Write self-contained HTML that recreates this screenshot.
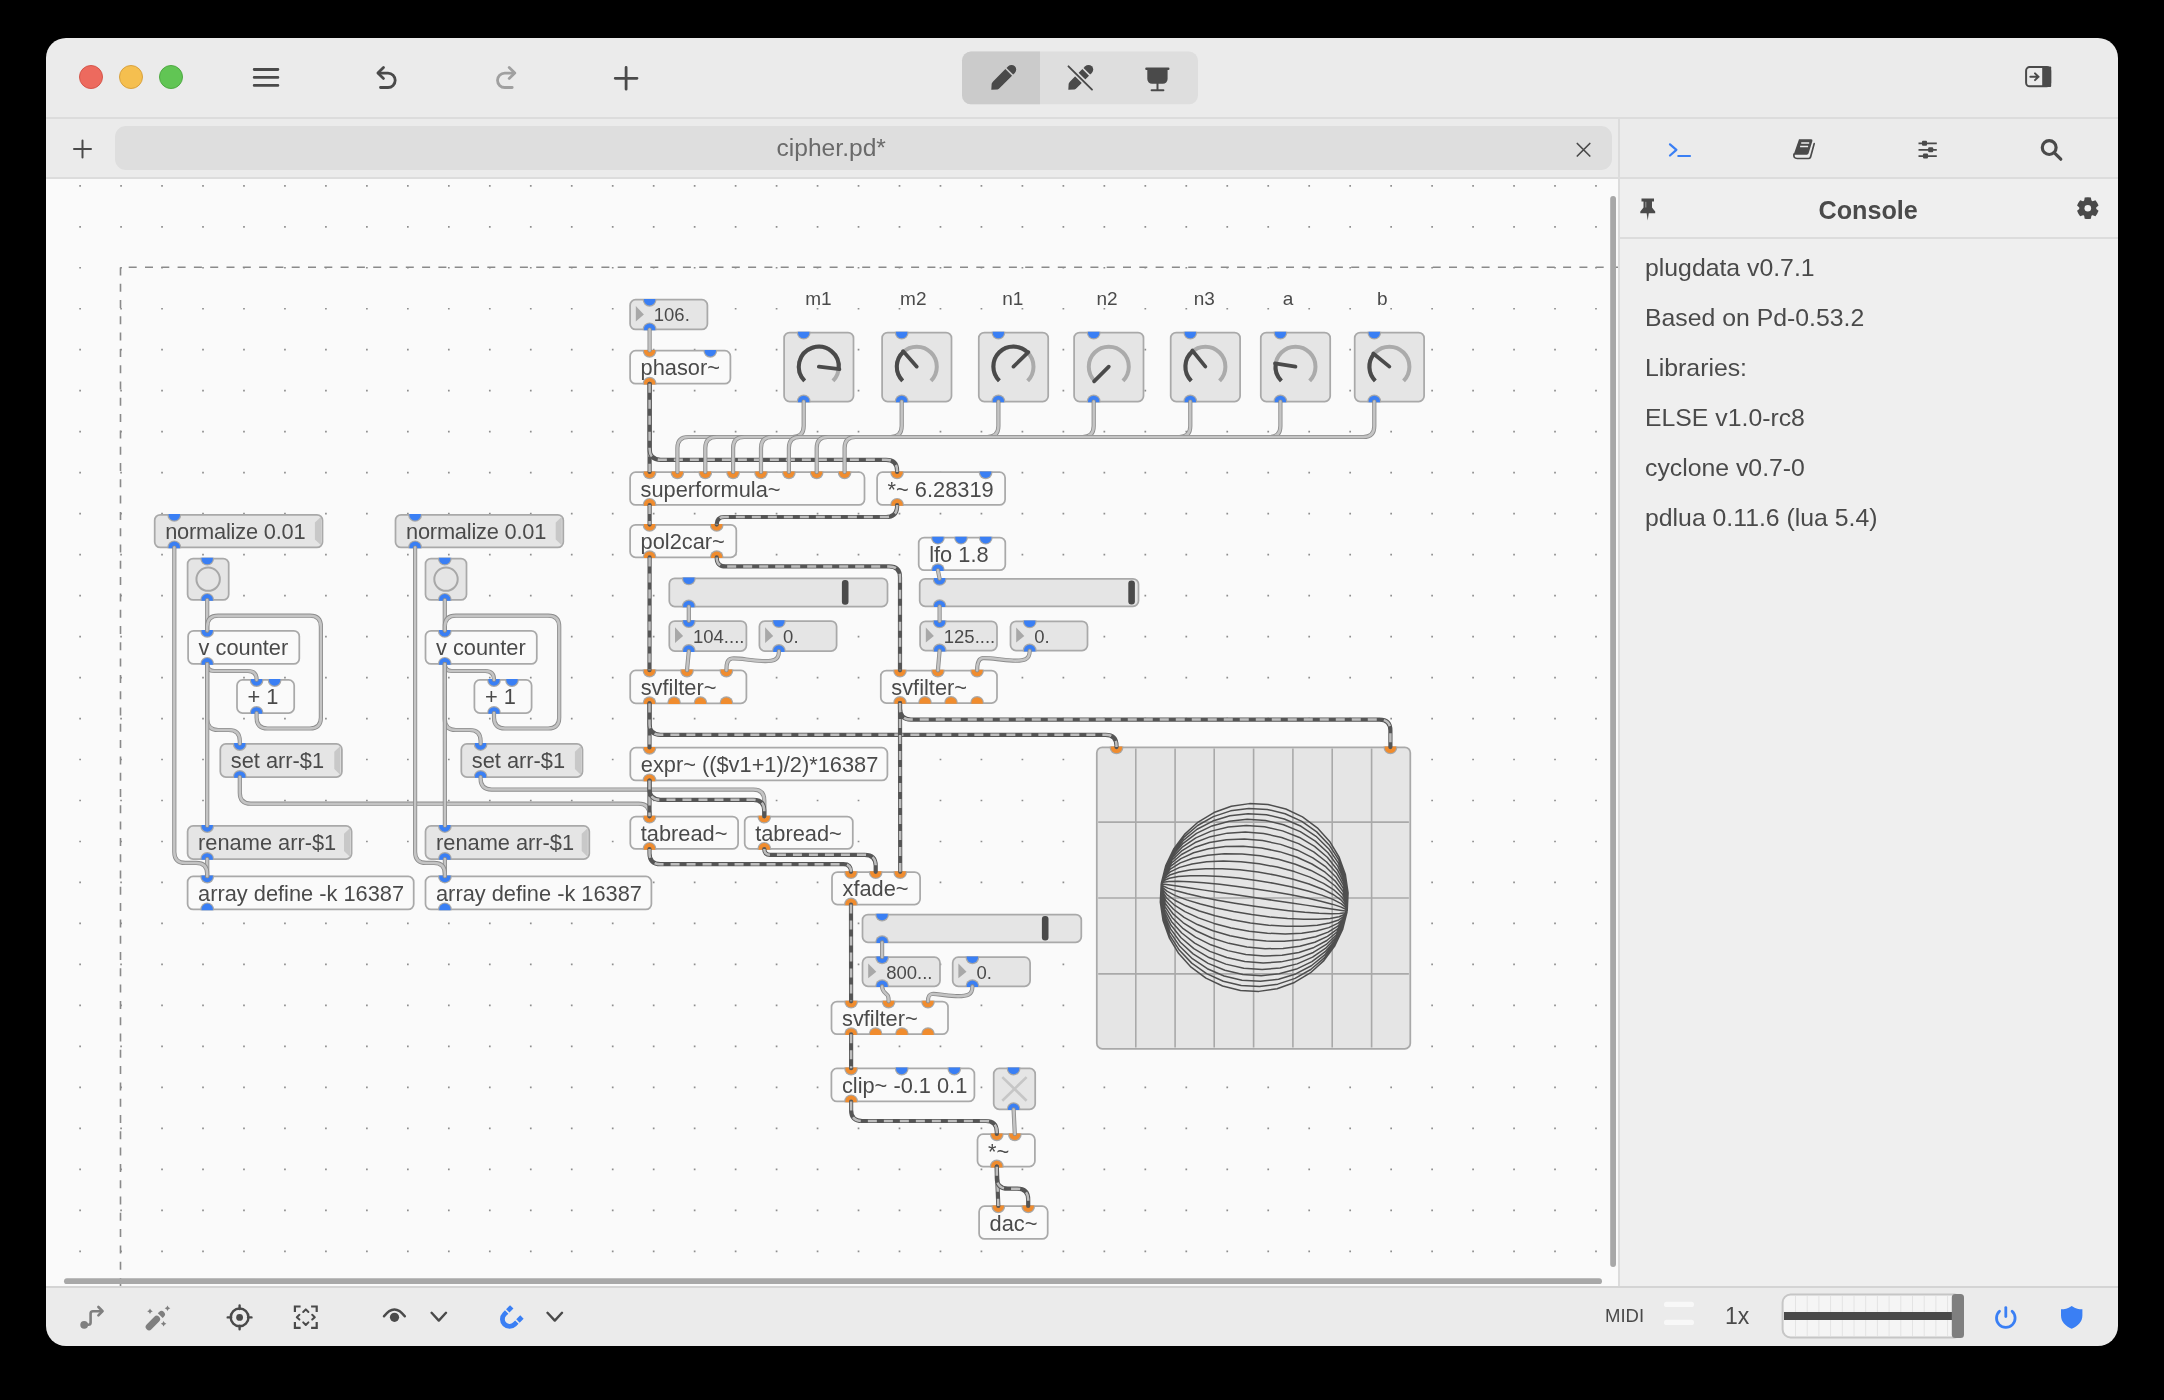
<!DOCTYPE html><html><head><meta charset="utf-8"><style>
*{margin:0;padding:0;box-sizing:border-box}
html,body{width:2164px;height:1400px;background:#000;overflow:hidden;font-family:"Liberation Sans", sans-serif}
.win{position:absolute;left:46px;top:38px;width:2072px;height:1308px;border-radius:20px;background:#EBEBEB;overflow:hidden}
.a{position:absolute}
.t{position:absolute;white-space:nowrap;color:#4A4A4A;line-height:1}
.tl{position:absolute;left:0;top:0;width:2164px;height:1400px;will-change:transform}
</style></head><body>
<div class="win">
<div class="a" style="left:-46px;top:-38px;width:2164px;height:1400px">
<div class="a" style="left:46px;top:117px;width:2072px;height:2px;background:#DCDCDC"></div>
<div class="a" style="left:46px;top:177px;width:1572px;height:2px;background:#DCDCDC"></div>
<div class="a" style="left:46px;top:179px;width:1572px;height:1108px;background:#FAFAFA"></div>
<div class="a" style="left:1620px;top:119px;width:498px;height:1168px;background:#EFEFEF"></div>
<div class="a" style="left:1620px;top:119px;width:498px;height:58px;background:#EBEBEB"></div>
<div class="a" style="left:1618px;top:119px;width:2px;height:1168px;background:#DCDCDC"></div>
<div class="a" style="left:1620px;top:177px;width:498px;height:2px;background:#DCDCDC"></div>
<div class="a" style="left:1620px;top:237px;width:498px;height:2px;background:#DCDCDC"></div>
<div class="a" style="left:46px;top:1286px;width:2072px;height:2px;background:#D4D4D4"></div>
<svg class="a" style="left:0;top:0" width="2164" height="1400"><path fill="#8E8E8E" d="M79.25 184.95h1.7v1.7h-1.7zM79.25 225.93h1.7v1.7h-1.7zM79.25 266.91h1.7v1.7h-1.7zM79.25 307.89h1.7v1.7h-1.7zM79.25 348.87h1.7v1.7h-1.7zM79.25 389.85h1.7v1.7h-1.7zM79.25 430.83h1.7v1.7h-1.7zM79.25 471.81h1.7v1.7h-1.7zM79.25 512.79h1.7v1.7h-1.7zM79.25 553.77h1.7v1.7h-1.7zM79.25 594.75h1.7v1.7h-1.7zM79.25 635.73h1.7v1.7h-1.7zM79.25 676.71h1.7v1.7h-1.7zM79.25 717.69h1.7v1.7h-1.7zM79.25 758.67h1.7v1.7h-1.7zM79.25 799.65h1.7v1.7h-1.7zM79.25 840.63h1.7v1.7h-1.7zM79.25 881.61h1.7v1.7h-1.7zM79.25 922.59h1.7v1.7h-1.7zM79.25 963.57h1.7v1.7h-1.7zM79.25 1004.55h1.7v1.7h-1.7zM79.25 1045.53h1.7v1.7h-1.7zM79.25 1086.51h1.7v1.7h-1.7zM79.25 1127.49h1.7v1.7h-1.7zM79.25 1168.47h1.7v1.7h-1.7zM79.25 1209.45h1.7v1.7h-1.7zM79.25 1250.43h1.7v1.7h-1.7zM120.22 184.95h1.7v1.7h-1.7zM120.22 225.93h1.7v1.7h-1.7zM120.22 266.91h1.7v1.7h-1.7zM120.22 307.89h1.7v1.7h-1.7zM120.22 348.87h1.7v1.7h-1.7zM120.22 389.85h1.7v1.7h-1.7zM120.22 430.83h1.7v1.7h-1.7zM120.22 471.81h1.7v1.7h-1.7zM120.22 512.79h1.7v1.7h-1.7zM120.22 553.77h1.7v1.7h-1.7zM120.22 594.75h1.7v1.7h-1.7zM120.22 635.73h1.7v1.7h-1.7zM120.22 676.71h1.7v1.7h-1.7zM120.22 717.69h1.7v1.7h-1.7zM120.22 758.67h1.7v1.7h-1.7zM120.22 799.65h1.7v1.7h-1.7zM120.22 840.63h1.7v1.7h-1.7zM120.22 881.61h1.7v1.7h-1.7zM120.22 922.59h1.7v1.7h-1.7zM120.22 963.57h1.7v1.7h-1.7zM120.22 1004.55h1.7v1.7h-1.7zM120.22 1045.53h1.7v1.7h-1.7zM120.22 1086.51h1.7v1.7h-1.7zM120.22 1127.49h1.7v1.7h-1.7zM120.22 1168.47h1.7v1.7h-1.7zM120.22 1209.45h1.7v1.7h-1.7zM120.22 1250.43h1.7v1.7h-1.7zM161.19 184.95h1.7v1.7h-1.7zM161.19 225.93h1.7v1.7h-1.7zM161.19 266.91h1.7v1.7h-1.7zM161.19 307.89h1.7v1.7h-1.7zM161.19 348.87h1.7v1.7h-1.7zM161.19 389.85h1.7v1.7h-1.7zM161.19 430.83h1.7v1.7h-1.7zM161.19 471.81h1.7v1.7h-1.7zM161.19 512.79h1.7v1.7h-1.7zM161.19 553.77h1.7v1.7h-1.7zM161.19 594.75h1.7v1.7h-1.7zM161.19 635.73h1.7v1.7h-1.7zM161.19 676.71h1.7v1.7h-1.7zM161.19 717.69h1.7v1.7h-1.7zM161.19 758.67h1.7v1.7h-1.7zM161.19 799.65h1.7v1.7h-1.7zM161.19 840.63h1.7v1.7h-1.7zM161.19 881.61h1.7v1.7h-1.7zM161.19 922.59h1.7v1.7h-1.7zM161.19 963.57h1.7v1.7h-1.7zM161.19 1004.55h1.7v1.7h-1.7zM161.19 1045.53h1.7v1.7h-1.7zM161.19 1086.51h1.7v1.7h-1.7zM161.19 1127.49h1.7v1.7h-1.7zM161.19 1168.47h1.7v1.7h-1.7zM161.19 1209.45h1.7v1.7h-1.7zM161.19 1250.43h1.7v1.7h-1.7zM202.16 184.95h1.7v1.7h-1.7zM202.16 225.93h1.7v1.7h-1.7zM202.16 266.91h1.7v1.7h-1.7zM202.16 307.89h1.7v1.7h-1.7zM202.16 348.87h1.7v1.7h-1.7zM202.16 389.85h1.7v1.7h-1.7zM202.16 430.83h1.7v1.7h-1.7zM202.16 471.81h1.7v1.7h-1.7zM202.16 512.79h1.7v1.7h-1.7zM202.16 553.77h1.7v1.7h-1.7zM202.16 594.75h1.7v1.7h-1.7zM202.16 635.73h1.7v1.7h-1.7zM202.16 676.71h1.7v1.7h-1.7zM202.16 717.69h1.7v1.7h-1.7zM202.16 758.67h1.7v1.7h-1.7zM202.16 799.65h1.7v1.7h-1.7zM202.16 840.63h1.7v1.7h-1.7zM202.16 881.61h1.7v1.7h-1.7zM202.16 922.59h1.7v1.7h-1.7zM202.16 963.57h1.7v1.7h-1.7zM202.16 1004.55h1.7v1.7h-1.7zM202.16 1045.53h1.7v1.7h-1.7zM202.16 1086.51h1.7v1.7h-1.7zM202.16 1127.49h1.7v1.7h-1.7zM202.16 1168.47h1.7v1.7h-1.7zM202.16 1209.45h1.7v1.7h-1.7zM202.16 1250.43h1.7v1.7h-1.7zM243.13 184.95h1.7v1.7h-1.7zM243.13 225.93h1.7v1.7h-1.7zM243.13 266.91h1.7v1.7h-1.7zM243.13 307.89h1.7v1.7h-1.7zM243.13 348.87h1.7v1.7h-1.7zM243.13 389.85h1.7v1.7h-1.7zM243.13 430.83h1.7v1.7h-1.7zM243.13 471.81h1.7v1.7h-1.7zM243.13 512.79h1.7v1.7h-1.7zM243.13 553.77h1.7v1.7h-1.7zM243.13 594.75h1.7v1.7h-1.7zM243.13 635.73h1.7v1.7h-1.7zM243.13 676.71h1.7v1.7h-1.7zM243.13 717.69h1.7v1.7h-1.7zM243.13 758.67h1.7v1.7h-1.7zM243.13 799.65h1.7v1.7h-1.7zM243.13 840.63h1.7v1.7h-1.7zM243.13 881.61h1.7v1.7h-1.7zM243.13 922.59h1.7v1.7h-1.7zM243.13 963.57h1.7v1.7h-1.7zM243.13 1004.55h1.7v1.7h-1.7zM243.13 1045.53h1.7v1.7h-1.7zM243.13 1086.51h1.7v1.7h-1.7zM243.13 1127.49h1.7v1.7h-1.7zM243.13 1168.47h1.7v1.7h-1.7zM243.13 1209.45h1.7v1.7h-1.7zM243.13 1250.43h1.7v1.7h-1.7zM284.10 184.95h1.7v1.7h-1.7zM284.10 225.93h1.7v1.7h-1.7zM284.10 266.91h1.7v1.7h-1.7zM284.10 307.89h1.7v1.7h-1.7zM284.10 348.87h1.7v1.7h-1.7zM284.10 389.85h1.7v1.7h-1.7zM284.10 430.83h1.7v1.7h-1.7zM284.10 471.81h1.7v1.7h-1.7zM284.10 512.79h1.7v1.7h-1.7zM284.10 553.77h1.7v1.7h-1.7zM284.10 594.75h1.7v1.7h-1.7zM284.10 635.73h1.7v1.7h-1.7zM284.10 676.71h1.7v1.7h-1.7zM284.10 717.69h1.7v1.7h-1.7zM284.10 758.67h1.7v1.7h-1.7zM284.10 799.65h1.7v1.7h-1.7zM284.10 840.63h1.7v1.7h-1.7zM284.10 881.61h1.7v1.7h-1.7zM284.10 922.59h1.7v1.7h-1.7zM284.10 963.57h1.7v1.7h-1.7zM284.10 1004.55h1.7v1.7h-1.7zM284.10 1045.53h1.7v1.7h-1.7zM284.10 1086.51h1.7v1.7h-1.7zM284.10 1127.49h1.7v1.7h-1.7zM284.10 1168.47h1.7v1.7h-1.7zM284.10 1209.45h1.7v1.7h-1.7zM284.10 1250.43h1.7v1.7h-1.7zM325.07 184.95h1.7v1.7h-1.7zM325.07 225.93h1.7v1.7h-1.7zM325.07 266.91h1.7v1.7h-1.7zM325.07 307.89h1.7v1.7h-1.7zM325.07 348.87h1.7v1.7h-1.7zM325.07 389.85h1.7v1.7h-1.7zM325.07 430.83h1.7v1.7h-1.7zM325.07 471.81h1.7v1.7h-1.7zM325.07 512.79h1.7v1.7h-1.7zM325.07 553.77h1.7v1.7h-1.7zM325.07 594.75h1.7v1.7h-1.7zM325.07 635.73h1.7v1.7h-1.7zM325.07 676.71h1.7v1.7h-1.7zM325.07 717.69h1.7v1.7h-1.7zM325.07 758.67h1.7v1.7h-1.7zM325.07 799.65h1.7v1.7h-1.7zM325.07 840.63h1.7v1.7h-1.7zM325.07 881.61h1.7v1.7h-1.7zM325.07 922.59h1.7v1.7h-1.7zM325.07 963.57h1.7v1.7h-1.7zM325.07 1004.55h1.7v1.7h-1.7zM325.07 1045.53h1.7v1.7h-1.7zM325.07 1086.51h1.7v1.7h-1.7zM325.07 1127.49h1.7v1.7h-1.7zM325.07 1168.47h1.7v1.7h-1.7zM325.07 1209.45h1.7v1.7h-1.7zM325.07 1250.43h1.7v1.7h-1.7zM366.04 184.95h1.7v1.7h-1.7zM366.04 225.93h1.7v1.7h-1.7zM366.04 266.91h1.7v1.7h-1.7zM366.04 307.89h1.7v1.7h-1.7zM366.04 348.87h1.7v1.7h-1.7zM366.04 389.85h1.7v1.7h-1.7zM366.04 430.83h1.7v1.7h-1.7zM366.04 471.81h1.7v1.7h-1.7zM366.04 512.79h1.7v1.7h-1.7zM366.04 553.77h1.7v1.7h-1.7zM366.04 594.75h1.7v1.7h-1.7zM366.04 635.73h1.7v1.7h-1.7zM366.04 676.71h1.7v1.7h-1.7zM366.04 717.69h1.7v1.7h-1.7zM366.04 758.67h1.7v1.7h-1.7zM366.04 799.65h1.7v1.7h-1.7zM366.04 840.63h1.7v1.7h-1.7zM366.04 881.61h1.7v1.7h-1.7zM366.04 922.59h1.7v1.7h-1.7zM366.04 963.57h1.7v1.7h-1.7zM366.04 1004.55h1.7v1.7h-1.7zM366.04 1045.53h1.7v1.7h-1.7zM366.04 1086.51h1.7v1.7h-1.7zM366.04 1127.49h1.7v1.7h-1.7zM366.04 1168.47h1.7v1.7h-1.7zM366.04 1209.45h1.7v1.7h-1.7zM366.04 1250.43h1.7v1.7h-1.7zM407.01 184.95h1.7v1.7h-1.7zM407.01 225.93h1.7v1.7h-1.7zM407.01 266.91h1.7v1.7h-1.7zM407.01 307.89h1.7v1.7h-1.7zM407.01 348.87h1.7v1.7h-1.7zM407.01 389.85h1.7v1.7h-1.7zM407.01 430.83h1.7v1.7h-1.7zM407.01 471.81h1.7v1.7h-1.7zM407.01 512.79h1.7v1.7h-1.7zM407.01 553.77h1.7v1.7h-1.7zM407.01 594.75h1.7v1.7h-1.7zM407.01 635.73h1.7v1.7h-1.7zM407.01 676.71h1.7v1.7h-1.7zM407.01 717.69h1.7v1.7h-1.7zM407.01 758.67h1.7v1.7h-1.7zM407.01 799.65h1.7v1.7h-1.7zM407.01 840.63h1.7v1.7h-1.7zM407.01 881.61h1.7v1.7h-1.7zM407.01 922.59h1.7v1.7h-1.7zM407.01 963.57h1.7v1.7h-1.7zM407.01 1004.55h1.7v1.7h-1.7zM407.01 1045.53h1.7v1.7h-1.7zM407.01 1086.51h1.7v1.7h-1.7zM407.01 1127.49h1.7v1.7h-1.7zM407.01 1168.47h1.7v1.7h-1.7zM407.01 1209.45h1.7v1.7h-1.7zM407.01 1250.43h1.7v1.7h-1.7zM447.98 184.95h1.7v1.7h-1.7zM447.98 225.93h1.7v1.7h-1.7zM447.98 266.91h1.7v1.7h-1.7zM447.98 307.89h1.7v1.7h-1.7zM447.98 348.87h1.7v1.7h-1.7zM447.98 389.85h1.7v1.7h-1.7zM447.98 430.83h1.7v1.7h-1.7zM447.98 471.81h1.7v1.7h-1.7zM447.98 512.79h1.7v1.7h-1.7zM447.98 553.77h1.7v1.7h-1.7zM447.98 594.75h1.7v1.7h-1.7zM447.98 635.73h1.7v1.7h-1.7zM447.98 676.71h1.7v1.7h-1.7zM447.98 717.69h1.7v1.7h-1.7zM447.98 758.67h1.7v1.7h-1.7zM447.98 799.65h1.7v1.7h-1.7zM447.98 840.63h1.7v1.7h-1.7zM447.98 881.61h1.7v1.7h-1.7zM447.98 922.59h1.7v1.7h-1.7zM447.98 963.57h1.7v1.7h-1.7zM447.98 1004.55h1.7v1.7h-1.7zM447.98 1045.53h1.7v1.7h-1.7zM447.98 1086.51h1.7v1.7h-1.7zM447.98 1127.49h1.7v1.7h-1.7zM447.98 1168.47h1.7v1.7h-1.7zM447.98 1209.45h1.7v1.7h-1.7zM447.98 1250.43h1.7v1.7h-1.7zM488.95 184.95h1.7v1.7h-1.7zM488.95 225.93h1.7v1.7h-1.7zM488.95 266.91h1.7v1.7h-1.7zM488.95 307.89h1.7v1.7h-1.7zM488.95 348.87h1.7v1.7h-1.7zM488.95 389.85h1.7v1.7h-1.7zM488.95 430.83h1.7v1.7h-1.7zM488.95 471.81h1.7v1.7h-1.7zM488.95 512.79h1.7v1.7h-1.7zM488.95 553.77h1.7v1.7h-1.7zM488.95 594.75h1.7v1.7h-1.7zM488.95 635.73h1.7v1.7h-1.7zM488.95 676.71h1.7v1.7h-1.7zM488.95 717.69h1.7v1.7h-1.7zM488.95 758.67h1.7v1.7h-1.7zM488.95 799.65h1.7v1.7h-1.7zM488.95 840.63h1.7v1.7h-1.7zM488.95 881.61h1.7v1.7h-1.7zM488.95 922.59h1.7v1.7h-1.7zM488.95 963.57h1.7v1.7h-1.7zM488.95 1004.55h1.7v1.7h-1.7zM488.95 1045.53h1.7v1.7h-1.7zM488.95 1086.51h1.7v1.7h-1.7zM488.95 1127.49h1.7v1.7h-1.7zM488.95 1168.47h1.7v1.7h-1.7zM488.95 1209.45h1.7v1.7h-1.7zM488.95 1250.43h1.7v1.7h-1.7zM529.92 184.95h1.7v1.7h-1.7zM529.92 225.93h1.7v1.7h-1.7zM529.92 266.91h1.7v1.7h-1.7zM529.92 307.89h1.7v1.7h-1.7zM529.92 348.87h1.7v1.7h-1.7zM529.92 389.85h1.7v1.7h-1.7zM529.92 430.83h1.7v1.7h-1.7zM529.92 471.81h1.7v1.7h-1.7zM529.92 512.79h1.7v1.7h-1.7zM529.92 553.77h1.7v1.7h-1.7zM529.92 594.75h1.7v1.7h-1.7zM529.92 635.73h1.7v1.7h-1.7zM529.92 676.71h1.7v1.7h-1.7zM529.92 717.69h1.7v1.7h-1.7zM529.92 758.67h1.7v1.7h-1.7zM529.92 799.65h1.7v1.7h-1.7zM529.92 840.63h1.7v1.7h-1.7zM529.92 881.61h1.7v1.7h-1.7zM529.92 922.59h1.7v1.7h-1.7zM529.92 963.57h1.7v1.7h-1.7zM529.92 1004.55h1.7v1.7h-1.7zM529.92 1045.53h1.7v1.7h-1.7zM529.92 1086.51h1.7v1.7h-1.7zM529.92 1127.49h1.7v1.7h-1.7zM529.92 1168.47h1.7v1.7h-1.7zM529.92 1209.45h1.7v1.7h-1.7zM529.92 1250.43h1.7v1.7h-1.7zM570.89 184.95h1.7v1.7h-1.7zM570.89 225.93h1.7v1.7h-1.7zM570.89 266.91h1.7v1.7h-1.7zM570.89 307.89h1.7v1.7h-1.7zM570.89 348.87h1.7v1.7h-1.7zM570.89 389.85h1.7v1.7h-1.7zM570.89 430.83h1.7v1.7h-1.7zM570.89 471.81h1.7v1.7h-1.7zM570.89 512.79h1.7v1.7h-1.7zM570.89 553.77h1.7v1.7h-1.7zM570.89 594.75h1.7v1.7h-1.7zM570.89 635.73h1.7v1.7h-1.7zM570.89 676.71h1.7v1.7h-1.7zM570.89 717.69h1.7v1.7h-1.7zM570.89 758.67h1.7v1.7h-1.7zM570.89 799.65h1.7v1.7h-1.7zM570.89 840.63h1.7v1.7h-1.7zM570.89 881.61h1.7v1.7h-1.7zM570.89 922.59h1.7v1.7h-1.7zM570.89 963.57h1.7v1.7h-1.7zM570.89 1004.55h1.7v1.7h-1.7zM570.89 1045.53h1.7v1.7h-1.7zM570.89 1086.51h1.7v1.7h-1.7zM570.89 1127.49h1.7v1.7h-1.7zM570.89 1168.47h1.7v1.7h-1.7zM570.89 1209.45h1.7v1.7h-1.7zM570.89 1250.43h1.7v1.7h-1.7zM611.86 184.95h1.7v1.7h-1.7zM611.86 225.93h1.7v1.7h-1.7zM611.86 266.91h1.7v1.7h-1.7zM611.86 307.89h1.7v1.7h-1.7zM611.86 348.87h1.7v1.7h-1.7zM611.86 389.85h1.7v1.7h-1.7zM611.86 430.83h1.7v1.7h-1.7zM611.86 471.81h1.7v1.7h-1.7zM611.86 512.79h1.7v1.7h-1.7zM611.86 553.77h1.7v1.7h-1.7zM611.86 594.75h1.7v1.7h-1.7zM611.86 635.73h1.7v1.7h-1.7zM611.86 676.71h1.7v1.7h-1.7zM611.86 717.69h1.7v1.7h-1.7zM611.86 758.67h1.7v1.7h-1.7zM611.86 799.65h1.7v1.7h-1.7zM611.86 840.63h1.7v1.7h-1.7zM611.86 881.61h1.7v1.7h-1.7zM611.86 922.59h1.7v1.7h-1.7zM611.86 963.57h1.7v1.7h-1.7zM611.86 1004.55h1.7v1.7h-1.7zM611.86 1045.53h1.7v1.7h-1.7zM611.86 1086.51h1.7v1.7h-1.7zM611.86 1127.49h1.7v1.7h-1.7zM611.86 1168.47h1.7v1.7h-1.7zM611.86 1209.45h1.7v1.7h-1.7zM611.86 1250.43h1.7v1.7h-1.7zM652.83 184.95h1.7v1.7h-1.7zM652.83 225.93h1.7v1.7h-1.7zM652.83 266.91h1.7v1.7h-1.7zM652.83 307.89h1.7v1.7h-1.7zM652.83 348.87h1.7v1.7h-1.7zM652.83 389.85h1.7v1.7h-1.7zM652.83 430.83h1.7v1.7h-1.7zM652.83 471.81h1.7v1.7h-1.7zM652.83 512.79h1.7v1.7h-1.7zM652.83 553.77h1.7v1.7h-1.7zM652.83 594.75h1.7v1.7h-1.7zM652.83 635.73h1.7v1.7h-1.7zM652.83 676.71h1.7v1.7h-1.7zM652.83 717.69h1.7v1.7h-1.7zM652.83 758.67h1.7v1.7h-1.7zM652.83 799.65h1.7v1.7h-1.7zM652.83 840.63h1.7v1.7h-1.7zM652.83 881.61h1.7v1.7h-1.7zM652.83 922.59h1.7v1.7h-1.7zM652.83 963.57h1.7v1.7h-1.7zM652.83 1004.55h1.7v1.7h-1.7zM652.83 1045.53h1.7v1.7h-1.7zM652.83 1086.51h1.7v1.7h-1.7zM652.83 1127.49h1.7v1.7h-1.7zM652.83 1168.47h1.7v1.7h-1.7zM652.83 1209.45h1.7v1.7h-1.7zM652.83 1250.43h1.7v1.7h-1.7zM693.80 184.95h1.7v1.7h-1.7zM693.80 225.93h1.7v1.7h-1.7zM693.80 266.91h1.7v1.7h-1.7zM693.80 307.89h1.7v1.7h-1.7zM693.80 348.87h1.7v1.7h-1.7zM693.80 389.85h1.7v1.7h-1.7zM693.80 430.83h1.7v1.7h-1.7zM693.80 471.81h1.7v1.7h-1.7zM693.80 512.79h1.7v1.7h-1.7zM693.80 553.77h1.7v1.7h-1.7zM693.80 594.75h1.7v1.7h-1.7zM693.80 635.73h1.7v1.7h-1.7zM693.80 676.71h1.7v1.7h-1.7zM693.80 717.69h1.7v1.7h-1.7zM693.80 758.67h1.7v1.7h-1.7zM693.80 799.65h1.7v1.7h-1.7zM693.80 840.63h1.7v1.7h-1.7zM693.80 881.61h1.7v1.7h-1.7zM693.80 922.59h1.7v1.7h-1.7zM693.80 963.57h1.7v1.7h-1.7zM693.80 1004.55h1.7v1.7h-1.7zM693.80 1045.53h1.7v1.7h-1.7zM693.80 1086.51h1.7v1.7h-1.7zM693.80 1127.49h1.7v1.7h-1.7zM693.80 1168.47h1.7v1.7h-1.7zM693.80 1209.45h1.7v1.7h-1.7zM693.80 1250.43h1.7v1.7h-1.7zM734.77 184.95h1.7v1.7h-1.7zM734.77 225.93h1.7v1.7h-1.7zM734.77 266.91h1.7v1.7h-1.7zM734.77 307.89h1.7v1.7h-1.7zM734.77 348.87h1.7v1.7h-1.7zM734.77 389.85h1.7v1.7h-1.7zM734.77 430.83h1.7v1.7h-1.7zM734.77 471.81h1.7v1.7h-1.7zM734.77 512.79h1.7v1.7h-1.7zM734.77 553.77h1.7v1.7h-1.7zM734.77 594.75h1.7v1.7h-1.7zM734.77 635.73h1.7v1.7h-1.7zM734.77 676.71h1.7v1.7h-1.7zM734.77 717.69h1.7v1.7h-1.7zM734.77 758.67h1.7v1.7h-1.7zM734.77 799.65h1.7v1.7h-1.7zM734.77 840.63h1.7v1.7h-1.7zM734.77 881.61h1.7v1.7h-1.7zM734.77 922.59h1.7v1.7h-1.7zM734.77 963.57h1.7v1.7h-1.7zM734.77 1004.55h1.7v1.7h-1.7zM734.77 1045.53h1.7v1.7h-1.7zM734.77 1086.51h1.7v1.7h-1.7zM734.77 1127.49h1.7v1.7h-1.7zM734.77 1168.47h1.7v1.7h-1.7zM734.77 1209.45h1.7v1.7h-1.7zM734.77 1250.43h1.7v1.7h-1.7zM775.74 184.95h1.7v1.7h-1.7zM775.74 225.93h1.7v1.7h-1.7zM775.74 266.91h1.7v1.7h-1.7zM775.74 307.89h1.7v1.7h-1.7zM775.74 348.87h1.7v1.7h-1.7zM775.74 389.85h1.7v1.7h-1.7zM775.74 430.83h1.7v1.7h-1.7zM775.74 471.81h1.7v1.7h-1.7zM775.74 512.79h1.7v1.7h-1.7zM775.74 553.77h1.7v1.7h-1.7zM775.74 594.75h1.7v1.7h-1.7zM775.74 635.73h1.7v1.7h-1.7zM775.74 676.71h1.7v1.7h-1.7zM775.74 717.69h1.7v1.7h-1.7zM775.74 758.67h1.7v1.7h-1.7zM775.74 799.65h1.7v1.7h-1.7zM775.74 840.63h1.7v1.7h-1.7zM775.74 881.61h1.7v1.7h-1.7zM775.74 922.59h1.7v1.7h-1.7zM775.74 963.57h1.7v1.7h-1.7zM775.74 1004.55h1.7v1.7h-1.7zM775.74 1045.53h1.7v1.7h-1.7zM775.74 1086.51h1.7v1.7h-1.7zM775.74 1127.49h1.7v1.7h-1.7zM775.74 1168.47h1.7v1.7h-1.7zM775.74 1209.45h1.7v1.7h-1.7zM775.74 1250.43h1.7v1.7h-1.7zM816.71 184.95h1.7v1.7h-1.7zM816.71 225.93h1.7v1.7h-1.7zM816.71 266.91h1.7v1.7h-1.7zM816.71 307.89h1.7v1.7h-1.7zM816.71 348.87h1.7v1.7h-1.7zM816.71 389.85h1.7v1.7h-1.7zM816.71 430.83h1.7v1.7h-1.7zM816.71 471.81h1.7v1.7h-1.7zM816.71 512.79h1.7v1.7h-1.7zM816.71 553.77h1.7v1.7h-1.7zM816.71 594.75h1.7v1.7h-1.7zM816.71 635.73h1.7v1.7h-1.7zM816.71 676.71h1.7v1.7h-1.7zM816.71 717.69h1.7v1.7h-1.7zM816.71 758.67h1.7v1.7h-1.7zM816.71 799.65h1.7v1.7h-1.7zM816.71 840.63h1.7v1.7h-1.7zM816.71 881.61h1.7v1.7h-1.7zM816.71 922.59h1.7v1.7h-1.7zM816.71 963.57h1.7v1.7h-1.7zM816.71 1004.55h1.7v1.7h-1.7zM816.71 1045.53h1.7v1.7h-1.7zM816.71 1086.51h1.7v1.7h-1.7zM816.71 1127.49h1.7v1.7h-1.7zM816.71 1168.47h1.7v1.7h-1.7zM816.71 1209.45h1.7v1.7h-1.7zM816.71 1250.43h1.7v1.7h-1.7zM857.68 184.95h1.7v1.7h-1.7zM857.68 225.93h1.7v1.7h-1.7zM857.68 266.91h1.7v1.7h-1.7zM857.68 307.89h1.7v1.7h-1.7zM857.68 348.87h1.7v1.7h-1.7zM857.68 389.85h1.7v1.7h-1.7zM857.68 430.83h1.7v1.7h-1.7zM857.68 471.81h1.7v1.7h-1.7zM857.68 512.79h1.7v1.7h-1.7zM857.68 553.77h1.7v1.7h-1.7zM857.68 594.75h1.7v1.7h-1.7zM857.68 635.73h1.7v1.7h-1.7zM857.68 676.71h1.7v1.7h-1.7zM857.68 717.69h1.7v1.7h-1.7zM857.68 758.67h1.7v1.7h-1.7zM857.68 799.65h1.7v1.7h-1.7zM857.68 840.63h1.7v1.7h-1.7zM857.68 881.61h1.7v1.7h-1.7zM857.68 922.59h1.7v1.7h-1.7zM857.68 963.57h1.7v1.7h-1.7zM857.68 1004.55h1.7v1.7h-1.7zM857.68 1045.53h1.7v1.7h-1.7zM857.68 1086.51h1.7v1.7h-1.7zM857.68 1127.49h1.7v1.7h-1.7zM857.68 1168.47h1.7v1.7h-1.7zM857.68 1209.45h1.7v1.7h-1.7zM857.68 1250.43h1.7v1.7h-1.7zM898.65 184.95h1.7v1.7h-1.7zM898.65 225.93h1.7v1.7h-1.7zM898.65 266.91h1.7v1.7h-1.7zM898.65 307.89h1.7v1.7h-1.7zM898.65 348.87h1.7v1.7h-1.7zM898.65 389.85h1.7v1.7h-1.7zM898.65 430.83h1.7v1.7h-1.7zM898.65 471.81h1.7v1.7h-1.7zM898.65 512.79h1.7v1.7h-1.7zM898.65 553.77h1.7v1.7h-1.7zM898.65 594.75h1.7v1.7h-1.7zM898.65 635.73h1.7v1.7h-1.7zM898.65 676.71h1.7v1.7h-1.7zM898.65 717.69h1.7v1.7h-1.7zM898.65 758.67h1.7v1.7h-1.7zM898.65 799.65h1.7v1.7h-1.7zM898.65 840.63h1.7v1.7h-1.7zM898.65 881.61h1.7v1.7h-1.7zM898.65 922.59h1.7v1.7h-1.7zM898.65 963.57h1.7v1.7h-1.7zM898.65 1004.55h1.7v1.7h-1.7zM898.65 1045.53h1.7v1.7h-1.7zM898.65 1086.51h1.7v1.7h-1.7zM898.65 1127.49h1.7v1.7h-1.7zM898.65 1168.47h1.7v1.7h-1.7zM898.65 1209.45h1.7v1.7h-1.7zM898.65 1250.43h1.7v1.7h-1.7zM939.62 184.95h1.7v1.7h-1.7zM939.62 225.93h1.7v1.7h-1.7zM939.62 266.91h1.7v1.7h-1.7zM939.62 307.89h1.7v1.7h-1.7zM939.62 348.87h1.7v1.7h-1.7zM939.62 389.85h1.7v1.7h-1.7zM939.62 430.83h1.7v1.7h-1.7zM939.62 471.81h1.7v1.7h-1.7zM939.62 512.79h1.7v1.7h-1.7zM939.62 553.77h1.7v1.7h-1.7zM939.62 594.75h1.7v1.7h-1.7zM939.62 635.73h1.7v1.7h-1.7zM939.62 676.71h1.7v1.7h-1.7zM939.62 717.69h1.7v1.7h-1.7zM939.62 758.67h1.7v1.7h-1.7zM939.62 799.65h1.7v1.7h-1.7zM939.62 840.63h1.7v1.7h-1.7zM939.62 881.61h1.7v1.7h-1.7zM939.62 922.59h1.7v1.7h-1.7zM939.62 963.57h1.7v1.7h-1.7zM939.62 1004.55h1.7v1.7h-1.7zM939.62 1045.53h1.7v1.7h-1.7zM939.62 1086.51h1.7v1.7h-1.7zM939.62 1127.49h1.7v1.7h-1.7zM939.62 1168.47h1.7v1.7h-1.7zM939.62 1209.45h1.7v1.7h-1.7zM939.62 1250.43h1.7v1.7h-1.7zM980.59 184.95h1.7v1.7h-1.7zM980.59 225.93h1.7v1.7h-1.7zM980.59 266.91h1.7v1.7h-1.7zM980.59 307.89h1.7v1.7h-1.7zM980.59 348.87h1.7v1.7h-1.7zM980.59 389.85h1.7v1.7h-1.7zM980.59 430.83h1.7v1.7h-1.7zM980.59 471.81h1.7v1.7h-1.7zM980.59 512.79h1.7v1.7h-1.7zM980.59 553.77h1.7v1.7h-1.7zM980.59 594.75h1.7v1.7h-1.7zM980.59 635.73h1.7v1.7h-1.7zM980.59 676.71h1.7v1.7h-1.7zM980.59 717.69h1.7v1.7h-1.7zM980.59 758.67h1.7v1.7h-1.7zM980.59 799.65h1.7v1.7h-1.7zM980.59 840.63h1.7v1.7h-1.7zM980.59 881.61h1.7v1.7h-1.7zM980.59 922.59h1.7v1.7h-1.7zM980.59 963.57h1.7v1.7h-1.7zM980.59 1004.55h1.7v1.7h-1.7zM980.59 1045.53h1.7v1.7h-1.7zM980.59 1086.51h1.7v1.7h-1.7zM980.59 1127.49h1.7v1.7h-1.7zM980.59 1168.47h1.7v1.7h-1.7zM980.59 1209.45h1.7v1.7h-1.7zM980.59 1250.43h1.7v1.7h-1.7zM1021.56 184.95h1.7v1.7h-1.7zM1021.56 225.93h1.7v1.7h-1.7zM1021.56 266.91h1.7v1.7h-1.7zM1021.56 307.89h1.7v1.7h-1.7zM1021.56 348.87h1.7v1.7h-1.7zM1021.56 389.85h1.7v1.7h-1.7zM1021.56 430.83h1.7v1.7h-1.7zM1021.56 471.81h1.7v1.7h-1.7zM1021.56 512.79h1.7v1.7h-1.7zM1021.56 553.77h1.7v1.7h-1.7zM1021.56 594.75h1.7v1.7h-1.7zM1021.56 635.73h1.7v1.7h-1.7zM1021.56 676.71h1.7v1.7h-1.7zM1021.56 717.69h1.7v1.7h-1.7zM1021.56 758.67h1.7v1.7h-1.7zM1021.56 799.65h1.7v1.7h-1.7zM1021.56 840.63h1.7v1.7h-1.7zM1021.56 881.61h1.7v1.7h-1.7zM1021.56 922.59h1.7v1.7h-1.7zM1021.56 963.57h1.7v1.7h-1.7zM1021.56 1004.55h1.7v1.7h-1.7zM1021.56 1045.53h1.7v1.7h-1.7zM1021.56 1086.51h1.7v1.7h-1.7zM1021.56 1127.49h1.7v1.7h-1.7zM1021.56 1168.47h1.7v1.7h-1.7zM1021.56 1209.45h1.7v1.7h-1.7zM1021.56 1250.43h1.7v1.7h-1.7zM1062.53 184.95h1.7v1.7h-1.7zM1062.53 225.93h1.7v1.7h-1.7zM1062.53 266.91h1.7v1.7h-1.7zM1062.53 307.89h1.7v1.7h-1.7zM1062.53 348.87h1.7v1.7h-1.7zM1062.53 389.85h1.7v1.7h-1.7zM1062.53 430.83h1.7v1.7h-1.7zM1062.53 471.81h1.7v1.7h-1.7zM1062.53 512.79h1.7v1.7h-1.7zM1062.53 553.77h1.7v1.7h-1.7zM1062.53 594.75h1.7v1.7h-1.7zM1062.53 635.73h1.7v1.7h-1.7zM1062.53 676.71h1.7v1.7h-1.7zM1062.53 717.69h1.7v1.7h-1.7zM1062.53 758.67h1.7v1.7h-1.7zM1062.53 799.65h1.7v1.7h-1.7zM1062.53 840.63h1.7v1.7h-1.7zM1062.53 881.61h1.7v1.7h-1.7zM1062.53 922.59h1.7v1.7h-1.7zM1062.53 963.57h1.7v1.7h-1.7zM1062.53 1004.55h1.7v1.7h-1.7zM1062.53 1045.53h1.7v1.7h-1.7zM1062.53 1086.51h1.7v1.7h-1.7zM1062.53 1127.49h1.7v1.7h-1.7zM1062.53 1168.47h1.7v1.7h-1.7zM1062.53 1209.45h1.7v1.7h-1.7zM1062.53 1250.43h1.7v1.7h-1.7zM1103.50 184.95h1.7v1.7h-1.7zM1103.50 225.93h1.7v1.7h-1.7zM1103.50 266.91h1.7v1.7h-1.7zM1103.50 307.89h1.7v1.7h-1.7zM1103.50 348.87h1.7v1.7h-1.7zM1103.50 389.85h1.7v1.7h-1.7zM1103.50 430.83h1.7v1.7h-1.7zM1103.50 471.81h1.7v1.7h-1.7zM1103.50 512.79h1.7v1.7h-1.7zM1103.50 553.77h1.7v1.7h-1.7zM1103.50 594.75h1.7v1.7h-1.7zM1103.50 635.73h1.7v1.7h-1.7zM1103.50 676.71h1.7v1.7h-1.7zM1103.50 717.69h1.7v1.7h-1.7zM1103.50 758.67h1.7v1.7h-1.7zM1103.50 799.65h1.7v1.7h-1.7zM1103.50 840.63h1.7v1.7h-1.7zM1103.50 881.61h1.7v1.7h-1.7zM1103.50 922.59h1.7v1.7h-1.7zM1103.50 963.57h1.7v1.7h-1.7zM1103.50 1004.55h1.7v1.7h-1.7zM1103.50 1045.53h1.7v1.7h-1.7zM1103.50 1086.51h1.7v1.7h-1.7zM1103.50 1127.49h1.7v1.7h-1.7zM1103.50 1168.47h1.7v1.7h-1.7zM1103.50 1209.45h1.7v1.7h-1.7zM1103.50 1250.43h1.7v1.7h-1.7zM1144.47 184.95h1.7v1.7h-1.7zM1144.47 225.93h1.7v1.7h-1.7zM1144.47 266.91h1.7v1.7h-1.7zM1144.47 307.89h1.7v1.7h-1.7zM1144.47 348.87h1.7v1.7h-1.7zM1144.47 389.85h1.7v1.7h-1.7zM1144.47 430.83h1.7v1.7h-1.7zM1144.47 471.81h1.7v1.7h-1.7zM1144.47 512.79h1.7v1.7h-1.7zM1144.47 553.77h1.7v1.7h-1.7zM1144.47 594.75h1.7v1.7h-1.7zM1144.47 635.73h1.7v1.7h-1.7zM1144.47 676.71h1.7v1.7h-1.7zM1144.47 717.69h1.7v1.7h-1.7zM1144.47 758.67h1.7v1.7h-1.7zM1144.47 799.65h1.7v1.7h-1.7zM1144.47 840.63h1.7v1.7h-1.7zM1144.47 881.61h1.7v1.7h-1.7zM1144.47 922.59h1.7v1.7h-1.7zM1144.47 963.57h1.7v1.7h-1.7zM1144.47 1004.55h1.7v1.7h-1.7zM1144.47 1045.53h1.7v1.7h-1.7zM1144.47 1086.51h1.7v1.7h-1.7zM1144.47 1127.49h1.7v1.7h-1.7zM1144.47 1168.47h1.7v1.7h-1.7zM1144.47 1209.45h1.7v1.7h-1.7zM1144.47 1250.43h1.7v1.7h-1.7zM1185.44 184.95h1.7v1.7h-1.7zM1185.44 225.93h1.7v1.7h-1.7zM1185.44 266.91h1.7v1.7h-1.7zM1185.44 307.89h1.7v1.7h-1.7zM1185.44 348.87h1.7v1.7h-1.7zM1185.44 389.85h1.7v1.7h-1.7zM1185.44 430.83h1.7v1.7h-1.7zM1185.44 471.81h1.7v1.7h-1.7zM1185.44 512.79h1.7v1.7h-1.7zM1185.44 553.77h1.7v1.7h-1.7zM1185.44 594.75h1.7v1.7h-1.7zM1185.44 635.73h1.7v1.7h-1.7zM1185.44 676.71h1.7v1.7h-1.7zM1185.44 717.69h1.7v1.7h-1.7zM1185.44 758.67h1.7v1.7h-1.7zM1185.44 799.65h1.7v1.7h-1.7zM1185.44 840.63h1.7v1.7h-1.7zM1185.44 881.61h1.7v1.7h-1.7zM1185.44 922.59h1.7v1.7h-1.7zM1185.44 963.57h1.7v1.7h-1.7zM1185.44 1004.55h1.7v1.7h-1.7zM1185.44 1045.53h1.7v1.7h-1.7zM1185.44 1086.51h1.7v1.7h-1.7zM1185.44 1127.49h1.7v1.7h-1.7zM1185.44 1168.47h1.7v1.7h-1.7zM1185.44 1209.45h1.7v1.7h-1.7zM1185.44 1250.43h1.7v1.7h-1.7zM1226.41 184.95h1.7v1.7h-1.7zM1226.41 225.93h1.7v1.7h-1.7zM1226.41 266.91h1.7v1.7h-1.7zM1226.41 307.89h1.7v1.7h-1.7zM1226.41 348.87h1.7v1.7h-1.7zM1226.41 389.85h1.7v1.7h-1.7zM1226.41 430.83h1.7v1.7h-1.7zM1226.41 471.81h1.7v1.7h-1.7zM1226.41 512.79h1.7v1.7h-1.7zM1226.41 553.77h1.7v1.7h-1.7zM1226.41 594.75h1.7v1.7h-1.7zM1226.41 635.73h1.7v1.7h-1.7zM1226.41 676.71h1.7v1.7h-1.7zM1226.41 717.69h1.7v1.7h-1.7zM1226.41 758.67h1.7v1.7h-1.7zM1226.41 799.65h1.7v1.7h-1.7zM1226.41 840.63h1.7v1.7h-1.7zM1226.41 881.61h1.7v1.7h-1.7zM1226.41 922.59h1.7v1.7h-1.7zM1226.41 963.57h1.7v1.7h-1.7zM1226.41 1004.55h1.7v1.7h-1.7zM1226.41 1045.53h1.7v1.7h-1.7zM1226.41 1086.51h1.7v1.7h-1.7zM1226.41 1127.49h1.7v1.7h-1.7zM1226.41 1168.47h1.7v1.7h-1.7zM1226.41 1209.45h1.7v1.7h-1.7zM1226.41 1250.43h1.7v1.7h-1.7zM1267.38 184.95h1.7v1.7h-1.7zM1267.38 225.93h1.7v1.7h-1.7zM1267.38 266.91h1.7v1.7h-1.7zM1267.38 307.89h1.7v1.7h-1.7zM1267.38 348.87h1.7v1.7h-1.7zM1267.38 389.85h1.7v1.7h-1.7zM1267.38 430.83h1.7v1.7h-1.7zM1267.38 471.81h1.7v1.7h-1.7zM1267.38 512.79h1.7v1.7h-1.7zM1267.38 553.77h1.7v1.7h-1.7zM1267.38 594.75h1.7v1.7h-1.7zM1267.38 635.73h1.7v1.7h-1.7zM1267.38 676.71h1.7v1.7h-1.7zM1267.38 717.69h1.7v1.7h-1.7zM1267.38 758.67h1.7v1.7h-1.7zM1267.38 799.65h1.7v1.7h-1.7zM1267.38 840.63h1.7v1.7h-1.7zM1267.38 881.61h1.7v1.7h-1.7zM1267.38 922.59h1.7v1.7h-1.7zM1267.38 963.57h1.7v1.7h-1.7zM1267.38 1004.55h1.7v1.7h-1.7zM1267.38 1045.53h1.7v1.7h-1.7zM1267.38 1086.51h1.7v1.7h-1.7zM1267.38 1127.49h1.7v1.7h-1.7zM1267.38 1168.47h1.7v1.7h-1.7zM1267.38 1209.45h1.7v1.7h-1.7zM1267.38 1250.43h1.7v1.7h-1.7zM1308.35 184.95h1.7v1.7h-1.7zM1308.35 225.93h1.7v1.7h-1.7zM1308.35 266.91h1.7v1.7h-1.7zM1308.35 307.89h1.7v1.7h-1.7zM1308.35 348.87h1.7v1.7h-1.7zM1308.35 389.85h1.7v1.7h-1.7zM1308.35 430.83h1.7v1.7h-1.7zM1308.35 471.81h1.7v1.7h-1.7zM1308.35 512.79h1.7v1.7h-1.7zM1308.35 553.77h1.7v1.7h-1.7zM1308.35 594.75h1.7v1.7h-1.7zM1308.35 635.73h1.7v1.7h-1.7zM1308.35 676.71h1.7v1.7h-1.7zM1308.35 717.69h1.7v1.7h-1.7zM1308.35 758.67h1.7v1.7h-1.7zM1308.35 799.65h1.7v1.7h-1.7zM1308.35 840.63h1.7v1.7h-1.7zM1308.35 881.61h1.7v1.7h-1.7zM1308.35 922.59h1.7v1.7h-1.7zM1308.35 963.57h1.7v1.7h-1.7zM1308.35 1004.55h1.7v1.7h-1.7zM1308.35 1045.53h1.7v1.7h-1.7zM1308.35 1086.51h1.7v1.7h-1.7zM1308.35 1127.49h1.7v1.7h-1.7zM1308.35 1168.47h1.7v1.7h-1.7zM1308.35 1209.45h1.7v1.7h-1.7zM1308.35 1250.43h1.7v1.7h-1.7zM1349.32 184.95h1.7v1.7h-1.7zM1349.32 225.93h1.7v1.7h-1.7zM1349.32 266.91h1.7v1.7h-1.7zM1349.32 307.89h1.7v1.7h-1.7zM1349.32 348.87h1.7v1.7h-1.7zM1349.32 389.85h1.7v1.7h-1.7zM1349.32 430.83h1.7v1.7h-1.7zM1349.32 471.81h1.7v1.7h-1.7zM1349.32 512.79h1.7v1.7h-1.7zM1349.32 553.77h1.7v1.7h-1.7zM1349.32 594.75h1.7v1.7h-1.7zM1349.32 635.73h1.7v1.7h-1.7zM1349.32 676.71h1.7v1.7h-1.7zM1349.32 717.69h1.7v1.7h-1.7zM1349.32 758.67h1.7v1.7h-1.7zM1349.32 799.65h1.7v1.7h-1.7zM1349.32 840.63h1.7v1.7h-1.7zM1349.32 881.61h1.7v1.7h-1.7zM1349.32 922.59h1.7v1.7h-1.7zM1349.32 963.57h1.7v1.7h-1.7zM1349.32 1004.55h1.7v1.7h-1.7zM1349.32 1045.53h1.7v1.7h-1.7zM1349.32 1086.51h1.7v1.7h-1.7zM1349.32 1127.49h1.7v1.7h-1.7zM1349.32 1168.47h1.7v1.7h-1.7zM1349.32 1209.45h1.7v1.7h-1.7zM1349.32 1250.43h1.7v1.7h-1.7zM1390.29 184.95h1.7v1.7h-1.7zM1390.29 225.93h1.7v1.7h-1.7zM1390.29 266.91h1.7v1.7h-1.7zM1390.29 307.89h1.7v1.7h-1.7zM1390.29 348.87h1.7v1.7h-1.7zM1390.29 389.85h1.7v1.7h-1.7zM1390.29 430.83h1.7v1.7h-1.7zM1390.29 471.81h1.7v1.7h-1.7zM1390.29 512.79h1.7v1.7h-1.7zM1390.29 553.77h1.7v1.7h-1.7zM1390.29 594.75h1.7v1.7h-1.7zM1390.29 635.73h1.7v1.7h-1.7zM1390.29 676.71h1.7v1.7h-1.7zM1390.29 717.69h1.7v1.7h-1.7zM1390.29 758.67h1.7v1.7h-1.7zM1390.29 799.65h1.7v1.7h-1.7zM1390.29 840.63h1.7v1.7h-1.7zM1390.29 881.61h1.7v1.7h-1.7zM1390.29 922.59h1.7v1.7h-1.7zM1390.29 963.57h1.7v1.7h-1.7zM1390.29 1004.55h1.7v1.7h-1.7zM1390.29 1045.53h1.7v1.7h-1.7zM1390.29 1086.51h1.7v1.7h-1.7zM1390.29 1127.49h1.7v1.7h-1.7zM1390.29 1168.47h1.7v1.7h-1.7zM1390.29 1209.45h1.7v1.7h-1.7zM1390.29 1250.43h1.7v1.7h-1.7zM1431.26 184.95h1.7v1.7h-1.7zM1431.26 225.93h1.7v1.7h-1.7zM1431.26 266.91h1.7v1.7h-1.7zM1431.26 307.89h1.7v1.7h-1.7zM1431.26 348.87h1.7v1.7h-1.7zM1431.26 389.85h1.7v1.7h-1.7zM1431.26 430.83h1.7v1.7h-1.7zM1431.26 471.81h1.7v1.7h-1.7zM1431.26 512.79h1.7v1.7h-1.7zM1431.26 553.77h1.7v1.7h-1.7zM1431.26 594.75h1.7v1.7h-1.7zM1431.26 635.73h1.7v1.7h-1.7zM1431.26 676.71h1.7v1.7h-1.7zM1431.26 717.69h1.7v1.7h-1.7zM1431.26 758.67h1.7v1.7h-1.7zM1431.26 799.65h1.7v1.7h-1.7zM1431.26 840.63h1.7v1.7h-1.7zM1431.26 881.61h1.7v1.7h-1.7zM1431.26 922.59h1.7v1.7h-1.7zM1431.26 963.57h1.7v1.7h-1.7zM1431.26 1004.55h1.7v1.7h-1.7zM1431.26 1045.53h1.7v1.7h-1.7zM1431.26 1086.51h1.7v1.7h-1.7zM1431.26 1127.49h1.7v1.7h-1.7zM1431.26 1168.47h1.7v1.7h-1.7zM1431.26 1209.45h1.7v1.7h-1.7zM1431.26 1250.43h1.7v1.7h-1.7zM1472.23 184.95h1.7v1.7h-1.7zM1472.23 225.93h1.7v1.7h-1.7zM1472.23 266.91h1.7v1.7h-1.7zM1472.23 307.89h1.7v1.7h-1.7zM1472.23 348.87h1.7v1.7h-1.7zM1472.23 389.85h1.7v1.7h-1.7zM1472.23 430.83h1.7v1.7h-1.7zM1472.23 471.81h1.7v1.7h-1.7zM1472.23 512.79h1.7v1.7h-1.7zM1472.23 553.77h1.7v1.7h-1.7zM1472.23 594.75h1.7v1.7h-1.7zM1472.23 635.73h1.7v1.7h-1.7zM1472.23 676.71h1.7v1.7h-1.7zM1472.23 717.69h1.7v1.7h-1.7zM1472.23 758.67h1.7v1.7h-1.7zM1472.23 799.65h1.7v1.7h-1.7zM1472.23 840.63h1.7v1.7h-1.7zM1472.23 881.61h1.7v1.7h-1.7zM1472.23 922.59h1.7v1.7h-1.7zM1472.23 963.57h1.7v1.7h-1.7zM1472.23 1004.55h1.7v1.7h-1.7zM1472.23 1045.53h1.7v1.7h-1.7zM1472.23 1086.51h1.7v1.7h-1.7zM1472.23 1127.49h1.7v1.7h-1.7zM1472.23 1168.47h1.7v1.7h-1.7zM1472.23 1209.45h1.7v1.7h-1.7zM1472.23 1250.43h1.7v1.7h-1.7zM1513.20 184.95h1.7v1.7h-1.7zM1513.20 225.93h1.7v1.7h-1.7zM1513.20 266.91h1.7v1.7h-1.7zM1513.20 307.89h1.7v1.7h-1.7zM1513.20 348.87h1.7v1.7h-1.7zM1513.20 389.85h1.7v1.7h-1.7zM1513.20 430.83h1.7v1.7h-1.7zM1513.20 471.81h1.7v1.7h-1.7zM1513.20 512.79h1.7v1.7h-1.7zM1513.20 553.77h1.7v1.7h-1.7zM1513.20 594.75h1.7v1.7h-1.7zM1513.20 635.73h1.7v1.7h-1.7zM1513.20 676.71h1.7v1.7h-1.7zM1513.20 717.69h1.7v1.7h-1.7zM1513.20 758.67h1.7v1.7h-1.7zM1513.20 799.65h1.7v1.7h-1.7zM1513.20 840.63h1.7v1.7h-1.7zM1513.20 881.61h1.7v1.7h-1.7zM1513.20 922.59h1.7v1.7h-1.7zM1513.20 963.57h1.7v1.7h-1.7zM1513.20 1004.55h1.7v1.7h-1.7zM1513.20 1045.53h1.7v1.7h-1.7zM1513.20 1086.51h1.7v1.7h-1.7zM1513.20 1127.49h1.7v1.7h-1.7zM1513.20 1168.47h1.7v1.7h-1.7zM1513.20 1209.45h1.7v1.7h-1.7zM1513.20 1250.43h1.7v1.7h-1.7zM1554.17 184.95h1.7v1.7h-1.7zM1554.17 225.93h1.7v1.7h-1.7zM1554.17 266.91h1.7v1.7h-1.7zM1554.17 307.89h1.7v1.7h-1.7zM1554.17 348.87h1.7v1.7h-1.7zM1554.17 389.85h1.7v1.7h-1.7zM1554.17 430.83h1.7v1.7h-1.7zM1554.17 471.81h1.7v1.7h-1.7zM1554.17 512.79h1.7v1.7h-1.7zM1554.17 553.77h1.7v1.7h-1.7zM1554.17 594.75h1.7v1.7h-1.7zM1554.17 635.73h1.7v1.7h-1.7zM1554.17 676.71h1.7v1.7h-1.7zM1554.17 717.69h1.7v1.7h-1.7zM1554.17 758.67h1.7v1.7h-1.7zM1554.17 799.65h1.7v1.7h-1.7zM1554.17 840.63h1.7v1.7h-1.7zM1554.17 881.61h1.7v1.7h-1.7zM1554.17 922.59h1.7v1.7h-1.7zM1554.17 963.57h1.7v1.7h-1.7zM1554.17 1004.55h1.7v1.7h-1.7zM1554.17 1045.53h1.7v1.7h-1.7zM1554.17 1086.51h1.7v1.7h-1.7zM1554.17 1127.49h1.7v1.7h-1.7zM1554.17 1168.47h1.7v1.7h-1.7zM1554.17 1209.45h1.7v1.7h-1.7zM1554.17 1250.43h1.7v1.7h-1.7zM1595.14 184.95h1.7v1.7h-1.7zM1595.14 225.93h1.7v1.7h-1.7zM1595.14 266.91h1.7v1.7h-1.7zM1595.14 307.89h1.7v1.7h-1.7zM1595.14 348.87h1.7v1.7h-1.7zM1595.14 389.85h1.7v1.7h-1.7zM1595.14 430.83h1.7v1.7h-1.7zM1595.14 471.81h1.7v1.7h-1.7zM1595.14 512.79h1.7v1.7h-1.7zM1595.14 553.77h1.7v1.7h-1.7zM1595.14 594.75h1.7v1.7h-1.7zM1595.14 635.73h1.7v1.7h-1.7zM1595.14 676.71h1.7v1.7h-1.7zM1595.14 717.69h1.7v1.7h-1.7zM1595.14 758.67h1.7v1.7h-1.7zM1595.14 799.65h1.7v1.7h-1.7zM1595.14 840.63h1.7v1.7h-1.7zM1595.14 881.61h1.7v1.7h-1.7zM1595.14 922.59h1.7v1.7h-1.7zM1595.14 963.57h1.7v1.7h-1.7zM1595.14 1004.55h1.7v1.7h-1.7zM1595.14 1045.53h1.7v1.7h-1.7zM1595.14 1086.51h1.7v1.7h-1.7zM1595.14 1127.49h1.7v1.7h-1.7zM1595.14 1168.47h1.7v1.7h-1.7zM1595.14 1209.45h1.7v1.7h-1.7zM1595.14 1250.43h1.7v1.7h-1.7z"/><path d="M120.5 1286V267.3H1618" fill="none" stroke="#8A8A8A" stroke-width="1.6" stroke-dasharray="8 8.3"/></svg>
<svg class="a" style="left:0;top:0" width="2164" height="1400"><circle cx="91" cy="77" r="11.5" fill="#ED6A5E" stroke="#D5564B" stroke-width="1"/><circle cx="131" cy="77" r="11.5" fill="#F5BF4F" stroke="#D9A23F" stroke-width="1"/><circle cx="171" cy="77" r="11.5" fill="#61C554" stroke="#4FAA43" stroke-width="1"/><path d="M254.2 69.5H277.9M254.2 77.4H277.9M254.2 85.4H277.9" stroke="#4A4A4A" stroke-width="2.8" stroke-linecap="round"/><path d="M378.6 73.1H388A7.2 7.2 0 0 1 388 87.5H380.5" fill="none" stroke="#4A4A4A" stroke-width="2.8" stroke-linecap="round" stroke-linejoin="round"/><path d="M383.5 67.6L377.9 73.1L383.5 78.4" fill="none" stroke="#4A4A4A" stroke-width="2.8" stroke-linecap="round" stroke-linejoin="round"/><path d="M514.1 73.1H504.7A7.2 7.2 0 0 0 504.7 87.5H512.2" fill="none" stroke="#A0A0A0" stroke-width="2.8" stroke-linecap="round" stroke-linejoin="round"/><path d="M509.2 67.6L514.8 73.1L509.2 78.4" fill="none" stroke="#A0A0A0" stroke-width="2.8" stroke-linecap="round" stroke-linejoin="round"/><path d="M626.1 67.5V89.2M615.2 78.3H637" stroke="#4A4A4A" stroke-width="2.8" stroke-linecap="round"/><rect x="962" y="51.6" width="236" height="52.7" rx="9" fill="#DEDEDE"/><path d="M971 51.6H1040V104.3H971A9 9 0 0 1 962 95.3V60.6A9 9 0 0 1 971 51.6Z" fill="#CBCBCB"/><g transform="translate(991.3 89.8) rotate(-45)"><path d="M0 0L4.6-4.1Q5.6-4.7 7.2-4.7H24.6V4.7H7.2Q5.6 4.7 4.6 4.1Z" fill="#4A4A4A"/><path d="M26.2-4.7H28.6A4.7 4.7 0 0 1 28.6 4.7H26.2Z" fill="#4A4A4A"/></g><g transform="translate(1068.3 89.8) rotate(-45)"><path d="M0 0L4.6-4.1Q5.6-4.7 7.2-4.7H24.6V4.7H7.2Q5.6 4.7 4.6 4.1Z" fill="#4A4A4A"/><path d="M26.2-4.7H28.6A4.7 4.7 0 0 1 28.6 4.7H26.2Z" fill="#4A4A4A"/></g><path d="M1068.5 66.3L1092 89.6" stroke="#DEDEDE" stroke-width="5"/><path d="M1068.5 66.3L1092 89.6" stroke="#4A4A4A" stroke-width="1.9" stroke-linecap="round"/><path d="M1146.4 68.8H1168.3" stroke="#4A4A4A" stroke-width="2.4" stroke-linecap="round"/><path d="M1147.3 69.5H1167.6V79A4.8 4.8 0 0 1 1162.8 83.8H1152.1A4.8 4.8 0 0 1 1147.3 79Z" fill="#4A4A4A"/><path d="M1157.5 83V90M1151.6 90.2H1163.4" stroke="#4A4A4A" stroke-width="2" stroke-linecap="round"/><rect x="2026.1" y="67.1" width="24.1" height="19.2" rx="3.6" fill="none" stroke="#4A4A4A" stroke-width="2"/><rect x="2042.2" y="66.5" width="9" height="20.5" rx="1" fill="#4A4A4A"/><path d="M2030.3 76.7H2038.6M2035 73.4L2038.4 76.7L2035 80.1" fill="none" stroke="#4A4A4A" stroke-width="2" stroke-linecap="round" stroke-linejoin="round"/><path d="M82.5 140.5V157.5M74 149H91" stroke="#4A4A4A" stroke-width="2" stroke-linecap="round"/><rect x="115" y="126" width="1497" height="44" rx="11" fill="#DEDEDE"/><path d="M1577.3 143.5L1589.8 156M1589.8 143.5L1577.3 156" stroke="#4A4A4A" stroke-width="1.7" stroke-linecap="round"/><path d="M1670 144.3L1676.4 149.9L1670 155.5M1678.3 156H1690" fill="none" stroke="#3A7FF4" stroke-width="2.2" stroke-linecap="round" stroke-linejoin="round"/><path d="M1799 139.2H1811.2Q1812.9 139.2 1812.4 140.9L1808.6 153.3Q1808.2 154.7 1806.8 154.7H1793.6Z" fill="#4A4A4A"/><path d="M1794 154Q1793.1 158.5 1797.2 158.5H1808.4Q1809.9 158.5 1810.5 157.1L1814.2 143.6" fill="none" stroke="#4A4A4A" stroke-width="1.7" stroke-linecap="round"/><path d="M1801.2 143.1H1809.2M1800.1 146.4H1808.1" stroke="#EBEBEB" stroke-width="1.5"/><path d="M1918.5 143.3H1936.8M1918.5 149.8H1936.8M1918.5 156.1H1936.8" stroke="#4A4A4A" stroke-width="1.8"/><rect x="1922" y="140.8" width="5" height="5" rx="1" fill="#4A4A4A"/><rect x="1928.2" y="147.3" width="5" height="5" rx="1" fill="#4A4A4A"/><rect x="1923" y="153.6" width="5" height="5" rx="1" fill="#4A4A4A"/><circle cx="2049.2" cy="147.6" r="6.9" fill="none" stroke="#4A4A4A" stroke-width="3.2"/><path d="M2054.4 152.8L2060.8 159.2" stroke="#4A4A4A" stroke-width="3.2" stroke-linecap="round"/><path d="M1641.5 198.5H1654V201.5H1652V207.5L1655.2 211.5V213.3H1640.3V211.5L1643.5 207.5V201.5H1641.5Z" fill="#4A4A4A"/><path d="M1646.6 213L1647.7 220.5L1648.8 213Z" fill="#4A4A4A"/><path d="M1645.8 201.8V207.5" stroke="#9A9A9A" stroke-width="1"/><path d="M2084.1000000000004 201.2L2084.7000000000003 197.6Q2087.8 197.0 2090.9 197.6L2091.5 201.2Z" transform="rotate(0 2087.8 208.2)" fill="#4A4A4A"/><path d="M2084.1000000000004 201.2L2084.7000000000003 197.6Q2087.8 197.0 2090.9 197.6L2091.5 201.2Z" transform="rotate(60 2087.8 208.2)" fill="#4A4A4A"/><path d="M2084.1000000000004 201.2L2084.7000000000003 197.6Q2087.8 197.0 2090.9 197.6L2091.5 201.2Z" transform="rotate(120 2087.8 208.2)" fill="#4A4A4A"/><path d="M2084.1000000000004 201.2L2084.7000000000003 197.6Q2087.8 197.0 2090.9 197.6L2091.5 201.2Z" transform="rotate(180 2087.8 208.2)" fill="#4A4A4A"/><path d="M2084.1000000000004 201.2L2084.7000000000003 197.6Q2087.8 197.0 2090.9 197.6L2091.5 201.2Z" transform="rotate(240 2087.8 208.2)" fill="#4A4A4A"/><path d="M2084.1000000000004 201.2L2084.7000000000003 197.6Q2087.8 197.0 2090.9 197.6L2091.5 201.2Z" transform="rotate(300 2087.8 208.2)" fill="#4A4A4A"/><circle cx="2087.8" cy="208.2" r="8.4" fill="#4A4A4A"/><circle cx="2087.8" cy="208.2" r="3.3" fill="#EFEFEF"/><rect x="1610.2" y="196" width="5.8" height="1071" rx="2.9" fill="#A8A8A8"/><rect x="64" y="1278.3" width="1538" height="5.8" rx="2.9" fill="#A8A8A8"/><circle cx="84.2" cy="1324.8" r="3.9" fill="#7F7F7F"/><path d="M84.2 1324.8H88.4Q90.6 1324.8 90.6 1322.6V1313.6Q90.6 1311.2 93 1311.2H102.6" fill="none" stroke="#7F7F7F" stroke-width="2.6" stroke-linejoin="round"/><path d="M98.4 1307L102.6 1311.2L98.4 1315.4" fill="none" stroke="#7F7F7F" stroke-width="2.6" stroke-linecap="round" stroke-linejoin="round"/><g transform="translate(148.5 1327.4) rotate(-45)"><rect x="-2.6" y="-3.4" width="17.6" height="6.8" rx="3.4" fill="#7F7F7F"/><path d="M16.6-3.4H18.4A3.4 3.4 0 0 1 18.4 3.4H16.6Z" fill="#7F7F7F"/></g><path d="M150 1308.5L150.98 1310.32L152.8 1311.3L150.98 1312.28L150 1314.1L149.02 1312.28L147.2 1311.3L149.02 1310.32Z" fill="#7F7F7F"/><path d="M167.5 1305.4L168.48 1307.22L170.3 1308.2L168.48 1309.18L167.5 1311.0L166.52 1309.18L164.7 1308.2L166.52 1307.22Z" fill="#7F7F7F"/><path d="M163.6 1321.0L164.57999999999998 1322.82L166.4 1323.8L164.57999999999998 1324.78L163.6 1326.6L162.62 1324.78L160.79999999999998 1323.8L162.62 1322.82Z" fill="#7F7F7F"/><circle cx="239.6" cy="1317.4" r="8.9" fill="none" stroke="#4A4A4A" stroke-width="2.4"/><circle cx="239.6" cy="1317.4" r="3.4" fill="#4A4A4A"/><path d="M239.6 1305.5V1309M239.6 1325.8V1329.3M227.7 1317.4H231.2M248 1317.4H251.5" stroke="#4A4A4A" stroke-width="2.4" stroke-linecap="round"/><path d="M294.9 1311V1306.5H299.5M312.2 1306.5H316.7V1311M316.7 1323.2V1327.8H312.2M299.5 1327.8H294.9V1323.2" fill="none" stroke="#4A4A4A" stroke-width="2.2" stroke-linecap="square"/><path d="M303.2 1312L305.8 1309.4L308.4 1312M303.2 1322.4L305.8 1325L308.4 1322.4M299.4 1314.8L296.8 1317.2L299.4 1319.6M312.2 1314.8L314.8 1317.2L312.2 1319.6" fill="none" stroke="#4A4A4A" stroke-width="2" stroke-linecap="round" stroke-linejoin="round"/><path d="M384 1316.3Q394.4 1302.5 404.8 1316.3" fill="none" stroke="#4A4A4A" stroke-width="2.5" stroke-linecap="round"/><circle cx="394.5" cy="1317.3" r="4.6" fill="#4A4A4A"/><path d="M431.6 1312.8L438.8 1320.6L446 1312.8M547.5 1312.8L554.8 1320.6L562 1312.8" fill="none" stroke="#4A4A4A" stroke-width="2.4" stroke-linecap="round" stroke-linejoin="round"/><g transform="translate(509.6 1319.2) rotate(45) scale(1.09)"><path d="M-8.8 -2.8V0A8.8 8.8 0 0 0 8.8 0V-2.8H4.4V0A4.4 4.4 0 0 1 -4.4 0V-2.8Z" fill="#3A7FF4"/><rect x="-8.8" y="-9.4" width="4.4" height="5.2" fill="#3A7FF4"/><rect x="4.4" y="-9.4" width="4.4" height="5.2" fill="#3A7FF4"/></g><rect x="1664" y="1301.8" width="30" height="5.2" rx="2.6" fill="#F8F8F8"/><rect x="1664" y="1319.8" width="30" height="5.2" rx="2.6" fill="#F8F8F8"/><rect x="1782.6" y="1294.5" width="180" height="43" rx="8" fill="#F5F5F5" stroke="#C6C6C6" stroke-width="2"/><path d="M1795.5 1296V1336M1807.2 1296V1336M1818.9 1296V1336M1830.6 1296V1336M1842.3 1296V1336M1854.0 1296V1336M1865.7 1296V1336M1877.4 1296V1336M1889.1 1296V1336M1900.8 1296V1336M1912.5 1296V1336M1924.2 1296V1336M1935.9 1296V1336M1947.6 1296V1336" stroke="#E4E4E4" stroke-width="1"/><rect x="1784" y="1312" width="168" height="8" fill="#4A4A4A"/><rect x="1951.8" y="1294" width="12.2" height="44" rx="3.5" fill="#7F7F7F"/><path d="M1999.5 1311.3A9.3 9.3 0 1 0 2012.1 1311.3" fill="none" stroke="#3A7FF4" stroke-width="2.8" stroke-linecap="round"/><path d="M2005.8 1307.6V1316.6" stroke="#3A7FF4" stroke-width="2.8" stroke-linecap="round"/><path d="M2071.7 1305.9C2067.5 1308.5 2064.5 1309.3 2061 1309.3V1315.5C2061 1322 2065.5 1326 2071.7 1328.8C2077.9 1326 2082.4 1322 2082.4 1315.5V1309.3C2078.9 1309.3 2075.9 1308.5 2071.7 1305.9Z" fill="#3A7FF4"/></svg>
<div class="tl">
<div class="t" style="left:776.5px;top:136px;font-size:24.6px;color:#6A6A6A">cipher.pd*</div>
<div class="t" style="left:1818.5px;top:198.3px;font-size:25.2px;font-weight:bold">Console</div>
<div class="t" style="left:1645px;top:256.3px;font-size:24.8px">plugdata v0.7.1</div>
<div class="t" style="left:1645px;top:306.3px;font-size:24.8px">Based on Pd-0.53.2</div>
<div class="t" style="left:1645px;top:356.3px;font-size:24.8px">Libraries:</div>
<div class="t" style="left:1645px;top:406.3px;font-size:24.8px">ELSE v1.0-rc8</div>
<div class="t" style="left:1645px;top:456.3px;font-size:24.8px">cyclone v0.7-0</div>
<div class="t" style="left:1645px;top:506.3px;font-size:24.8px">pdlua 0.11.6 (lua 5.4)</div>
<div class="t" style="left:1605px;top:1307px;font-size:18.5px">MIDI</div>
<div class="t" style="left:1725px;top:1304.7px;font-size:23px">1x</div>
</div>
<svg class="a" style="left:0;top:0" width="2164" height="1400"><rect x="630.1" y="299.7" width="77.3" height="29.7" rx="5.5" fill="#E5E5E5" stroke="#A9A9A9" stroke-width="1.75"/><path d="M635.8 306L643.9 314.5L635.8 321.4Z" fill="#A8A8A8"/><path d="M642.7 298.9V299.8A6.9 6.9 0 0 0 656.5 299.8V298.9Z" fill="#A8A8A8"/><path d="M643.9 298.9V299.8A5.7 5.7 0 0 0 655.3 299.8V298.9Z" fill="#3A7FF4"/><path d="M642.7 330.2V329.3A6.9 6.9 0 0 1 656.5 329.3V330.2Z" fill="#A8A8A8"/><path d="M643.9 330.2V329.3A5.7 5.7 0 0 1 655.3 329.3V330.2Z" fill="#3A7FF4"/><rect x="630.1" y="350.7" width="100.3" height="33" rx="5.5" fill="#FAFAFA" stroke="#A9A9A9" stroke-width="1.75"/><path d="M642.7 349.9V350.8A6.9 6.9 0 0 0 656.5 350.8V349.9Z" fill="#A8A8A8"/><path d="M643.9 349.9V350.8A5.7 5.7 0 0 0 655.3 350.8V349.9Z" fill="#F08C2E"/><path d="M703.4 349.9V350.8A6.9 6.9 0 0 0 717.2 350.8V349.9Z" fill="#A8A8A8"/><path d="M704.6 349.9V350.8A5.7 5.7 0 0 0 716 350.8V349.9Z" fill="#3A7FF4"/><path d="M642.7 384.5V383.6A6.9 6.9 0 0 1 656.5 383.6V384.5Z" fill="#A8A8A8"/><path d="M643.9 384.5V383.6A5.7 5.7 0 0 1 655.3 383.6V384.5Z" fill="#F08C2E"/><rect x="784.1" y="332.5" width="69.4" height="69" rx="5.5" fill="#E5E5E5" stroke="#A9A9A9" stroke-width="1.75"/><path d="M804.66 380.79A20 20 0 1 1 832.94 380.79" fill="none" stroke="#ABABAB" stroke-width="4.0"/><path d="M804.66 380.79A20 20 0 1 1 838.65 369.09" fill="none" stroke="#4A4A4A" stroke-width="4.0"/><path d="M818.8 366.65L839.44 369.18" stroke="#4A4A4A" stroke-width="3.7" stroke-linecap="round"/><path d="M796.8 331.7V332.6A6.9 6.9 0 0 0 810.6 332.6V331.7Z" fill="#A8A8A8"/><path d="M798 331.7V332.6A5.7 5.7 0 0 0 809.4 332.6V331.7Z" fill="#3A7FF4"/><path d="M796.8 402.3V401.4A6.9 6.9 0 0 1 810.6 401.4V402.3Z" fill="#A8A8A8"/><path d="M798 402.3V401.4A5.7 5.7 0 0 1 809.4 401.4V402.3Z" fill="#3A7FF4"/><rect x="882.1" y="332.5" width="69.4" height="69" rx="5.5" fill="#E5E5E5" stroke="#A9A9A9" stroke-width="1.75"/><path d="M902.66 380.79A20 20 0 1 1 930.94 380.79" fill="none" stroke="#ABABAB" stroke-width="4.0"/><path d="M902.66 380.79A20 20 0 0 1 903.52 351.69" fill="none" stroke="#4A4A4A" stroke-width="4.0"/><path d="M916.8 366.65L902.99 351.1" stroke="#4A4A4A" stroke-width="3.7" stroke-linecap="round"/><path d="M894.8 331.7V332.6A6.9 6.9 0 0 0 908.6 332.6V331.7Z" fill="#A8A8A8"/><path d="M896 331.7V332.6A5.7 5.7 0 0 0 907.4 332.6V331.7Z" fill="#3A7FF4"/><path d="M894.8 402.3V401.4A6.9 6.9 0 0 1 908.6 401.4V402.3Z" fill="#A8A8A8"/><path d="M896 402.3V401.4A5.7 5.7 0 0 1 907.4 401.4V402.3Z" fill="#3A7FF4"/><rect x="978.8" y="332.5" width="69.4" height="69" rx="5.5" fill="#E5E5E5" stroke="#A9A9A9" stroke-width="1.75"/><path d="M999.36 380.79A20 20 0 1 1 1027.64 380.79" fill="none" stroke="#ABABAB" stroke-width="4.0"/><path d="M999.36 380.79A20 20 0 1 1 1027.79 352.66" fill="none" stroke="#4A4A4A" stroke-width="4.0"/><path d="M1013.5 366.65L1028.36 352.1" stroke="#4A4A4A" stroke-width="3.7" stroke-linecap="round"/><path d="M991.5 331.7V332.6A6.9 6.9 0 0 0 1005.3 332.6V331.7Z" fill="#A8A8A8"/><path d="M992.7 331.7V332.6A5.7 5.7 0 0 0 1004.1 332.6V331.7Z" fill="#3A7FF4"/><path d="M991.5 402.3V401.4A6.9 6.9 0 0 1 1005.3 401.4V402.3Z" fill="#A8A8A8"/><path d="M992.7 402.3V401.4A5.7 5.7 0 0 1 1004.1 401.4V402.3Z" fill="#3A7FF4"/><rect x="1074.1" y="332.5" width="69.4" height="69" rx="5.5" fill="#E5E5E5" stroke="#A9A9A9" stroke-width="1.75"/><path d="M1094.66 380.79A20 20 0 1 1 1122.94 380.79" fill="none" stroke="#ABABAB" stroke-width="4.0"/><path d="M1108.8 366.65L1094.09 381.36" stroke="#4A4A4A" stroke-width="3.7" stroke-linecap="round"/><path d="M1086.8 331.7V332.6A6.9 6.9 0 0 0 1100.6 332.6V331.7Z" fill="#A8A8A8"/><path d="M1088 331.7V332.6A5.7 5.7 0 0 0 1099.4 332.6V331.7Z" fill="#3A7FF4"/><path d="M1086.8 402.3V401.4A6.9 6.9 0 0 1 1100.6 401.4V402.3Z" fill="#A8A8A8"/><path d="M1088 402.3V401.4A5.7 5.7 0 0 1 1099.4 401.4V402.3Z" fill="#3A7FF4"/><rect x="1170.7" y="332.5" width="69.4" height="69" rx="5.5" fill="#E5E5E5" stroke="#A9A9A9" stroke-width="1.75"/><path d="M1191.26 380.79A20 20 0 1 1 1219.54 380.79" fill="none" stroke="#ABABAB" stroke-width="4.0"/><path d="M1191.26 380.79A20 20 0 0 1 1192.81 351.11" fill="none" stroke="#4A4A4A" stroke-width="4.0"/><path d="M1205.4 366.65L1192.31 350.49" stroke="#4A4A4A" stroke-width="3.7" stroke-linecap="round"/><path d="M1183.4 331.7V332.6A6.9 6.9 0 0 0 1197.2 332.6V331.7Z" fill="#A8A8A8"/><path d="M1184.6 331.7V332.6A5.7 5.7 0 0 0 1196 332.6V331.7Z" fill="#3A7FF4"/><path d="M1183.4 402.3V401.4A6.9 6.9 0 0 1 1197.2 401.4V402.3Z" fill="#A8A8A8"/><path d="M1184.6 402.3V401.4A5.7 5.7 0 0 1 1196 401.4V402.3Z" fill="#3A7FF4"/><rect x="1260.8" y="332.5" width="69.4" height="69" rx="5.5" fill="#E5E5E5" stroke="#A9A9A9" stroke-width="1.75"/><path d="M1281.36 380.79A20 20 0 1 1 1309.64 380.79" fill="none" stroke="#ABABAB" stroke-width="4.0"/><path d="M1281.36 380.79A20 20 0 0 1 1275.75 363.49" fill="none" stroke="#4A4A4A" stroke-width="4.0"/><path d="M1295.5 366.65L1274.96 363.36" stroke="#4A4A4A" stroke-width="3.7" stroke-linecap="round"/><path d="M1273.5 331.7V332.6A6.9 6.9 0 0 0 1287.3 332.6V331.7Z" fill="#A8A8A8"/><path d="M1274.7 331.7V332.6A5.7 5.7 0 0 0 1286.1 332.6V331.7Z" fill="#3A7FF4"/><path d="M1273.5 402.3V401.4A6.9 6.9 0 0 1 1287.3 401.4V402.3Z" fill="#A8A8A8"/><path d="M1274.7 402.3V401.4A5.7 5.7 0 0 1 1286.1 401.4V402.3Z" fill="#3A7FF4"/><rect x="1354.7" y="332.5" width="69.4" height="69" rx="5.5" fill="#E5E5E5" stroke="#A9A9A9" stroke-width="1.75"/><path d="M1375.26 380.79A20 20 0 1 1 1403.54 380.79" fill="none" stroke="#ABABAB" stroke-width="4.0"/><path d="M1375.26 380.79A20 20 0 0 1 1373.9 354.01" fill="none" stroke="#4A4A4A" stroke-width="4.0"/><path d="M1389.4 366.65L1373.28 353.5" stroke="#4A4A4A" stroke-width="3.7" stroke-linecap="round"/><path d="M1367.4 331.7V332.6A6.9 6.9 0 0 0 1381.2 332.6V331.7Z" fill="#A8A8A8"/><path d="M1368.6 331.7V332.6A5.7 5.7 0 0 0 1380 332.6V331.7Z" fill="#3A7FF4"/><path d="M1367.4 402.3V401.4A6.9 6.9 0 0 1 1381.2 401.4V402.3Z" fill="#A8A8A8"/><path d="M1368.6 402.3V401.4A5.7 5.7 0 0 1 1380 401.4V402.3Z" fill="#3A7FF4"/><rect x="630.1" y="472.2" width="234.4" height="32.7" rx="5.5" fill="#FAFAFA" stroke="#A9A9A9" stroke-width="1.75"/><path d="M642.7 471.4V472.3A6.9 6.9 0 0 0 656.5 472.3V471.4Z" fill="#A8A8A8"/><path d="M643.9 471.4V472.3A5.7 5.7 0 0 0 655.3 472.3V471.4Z" fill="#F08C2E"/><path d="M670.5 471.4V472.3A6.9 6.9 0 0 0 684.3 472.3V471.4Z" fill="#A8A8A8"/><path d="M671.7 471.4V472.3A5.7 5.7 0 0 0 683.1 472.3V471.4Z" fill="#F08C2E"/><path d="M698.4 471.4V472.3A6.9 6.9 0 0 0 712.2 472.3V471.4Z" fill="#A8A8A8"/><path d="M699.6 471.4V472.3A5.7 5.7 0 0 0 711 472.3V471.4Z" fill="#F08C2E"/><path d="M726.2 471.4V472.3A6.9 6.9 0 0 0 740 472.3V471.4Z" fill="#A8A8A8"/><path d="M727.4 471.4V472.3A5.7 5.7 0 0 0 738.8 472.3V471.4Z" fill="#F08C2E"/><path d="M754.1 471.4V472.3A6.9 6.9 0 0 0 767.9 472.3V471.4Z" fill="#A8A8A8"/><path d="M755.3 471.4V472.3A5.7 5.7 0 0 0 766.7 472.3V471.4Z" fill="#F08C2E"/><path d="M782 471.4V472.3A6.9 6.9 0 0 0 795.8 472.3V471.4Z" fill="#A8A8A8"/><path d="M783.2 471.4V472.3A5.7 5.7 0 0 0 794.6 472.3V471.4Z" fill="#F08C2E"/><path d="M809.8 471.4V472.3A6.9 6.9 0 0 0 823.6 472.3V471.4Z" fill="#A8A8A8"/><path d="M811 471.4V472.3A5.7 5.7 0 0 0 822.4 472.3V471.4Z" fill="#F08C2E"/><path d="M837.7 471.4V472.3A6.9 6.9 0 0 0 851.5 472.3V471.4Z" fill="#A8A8A8"/><path d="M838.9 471.4V472.3A5.7 5.7 0 0 0 850.3 472.3V471.4Z" fill="#F08C2E"/><path d="M642.7 505.7V504.8A6.9 6.9 0 0 1 656.5 504.8V505.7Z" fill="#A8A8A8"/><path d="M643.9 505.7V504.8A5.7 5.7 0 0 1 655.3 504.8V505.7Z" fill="#F08C2E"/><rect x="877.1" y="472.2" width="128" height="32.7" rx="5.5" fill="#FAFAFA" stroke="#A9A9A9" stroke-width="1.75"/><path d="M890.2 471.4V472.3A6.9 6.9 0 0 0 904 472.3V471.4Z" fill="#A8A8A8"/><path d="M891.4 471.4V472.3A5.7 5.7 0 0 0 902.8 472.3V471.4Z" fill="#F08C2E"/><path d="M978.7 471.4V472.3A6.9 6.9 0 0 0 992.5 472.3V471.4Z" fill="#A8A8A8"/><path d="M979.9 471.4V472.3A5.7 5.7 0 0 0 991.3 472.3V471.4Z" fill="#3A7FF4"/><path d="M890.2 505.7V504.8A6.9 6.9 0 0 1 904 504.8V505.7Z" fill="#A8A8A8"/><path d="M891.4 505.7V504.8A5.7 5.7 0 0 1 902.8 504.8V505.7Z" fill="#F08C2E"/><rect x="630.1" y="524.8" width="106.2" height="32.5" rx="5.5" fill="#FAFAFA" stroke="#A9A9A9" stroke-width="1.75"/><path d="M642.7 524V524.9A6.9 6.9 0 0 0 656.5 524.9V524Z" fill="#A8A8A8"/><path d="M643.9 524V524.9A5.7 5.7 0 0 0 655.3 524.9V524Z" fill="#F08C2E"/><path d="M709.8 524V524.9A6.9 6.9 0 0 0 723.6 524.9V524Z" fill="#A8A8A8"/><path d="M711 524V524.9A5.7 5.7 0 0 0 722.4 524.9V524Z" fill="#F08C2E"/><path d="M642.7 558.1V557.2A6.9 6.9 0 0 1 656.5 557.2V558.1Z" fill="#A8A8A8"/><path d="M643.9 558.1V557.2A5.7 5.7 0 0 1 655.3 557.2V558.1Z" fill="#F08C2E"/><path d="M709.8 558.1V557.2A6.9 6.9 0 0 1 723.6 557.2V558.1Z" fill="#A8A8A8"/><path d="M711 558.1V557.2A5.7 5.7 0 0 1 722.4 557.2V558.1Z" fill="#F08C2E"/><rect x="154.7" y="514.8" width="167.8" height="32.6" rx="5.5" fill="#E5E5E5" stroke="#A9A9A9" stroke-width="1.75"/><path d="M321 516.8L314.9 522.6V539.5L321 545.3Z" fill="#C8C8C8"/><path d="M167.4 514V514.9A6.9 6.9 0 0 0 181.2 514.9V514Z" fill="#A8A8A8"/><path d="M168.6 514V514.9A5.7 5.7 0 0 0 180 514.9V514Z" fill="#3A7FF4"/><path d="M167.4 548.2V547.3A6.9 6.9 0 0 1 181.2 547.3V548.2Z" fill="#A8A8A8"/><path d="M168.6 548.2V547.3A5.7 5.7 0 0 1 180 547.3V548.2Z" fill="#3A7FF4"/><rect x="187.6" y="558.5" width="41.1" height="41.4" rx="5.5" fill="#E5E5E5" stroke="#A9A9A9" stroke-width="1.75"/><circle cx="208.15" cy="579.15" r="11.7" fill="none" stroke="#A8A8A8" stroke-width="2"/><path d="M200.3 557.7V558.6A6.9 6.9 0 0 0 214.1 558.6V557.7Z" fill="#A8A8A8"/><path d="M201.5 557.7V558.6A5.7 5.7 0 0 0 212.9 558.6V557.7Z" fill="#3A7FF4"/><path d="M200.3 600.7V599.8A6.9 6.9 0 0 1 214.1 599.8V600.7Z" fill="#A8A8A8"/><path d="M201.5 600.7V599.8A5.7 5.7 0 0 1 212.9 599.8V600.7Z" fill="#3A7FF4"/><rect x="188.1" y="630.8" width="111.2" height="33.1" rx="5.5" fill="#FAFAFA" stroke="#A9A9A9" stroke-width="1.75"/><path d="M200.3 630V630.9A6.9 6.9 0 0 0 214.1 630.9V630Z" fill="#A8A8A8"/><path d="M201.5 630V630.9A5.7 5.7 0 0 0 212.9 630.9V630Z" fill="#3A7FF4"/><path d="M200.3 664.7V663.8A6.9 6.9 0 0 1 214.1 663.8V664.7Z" fill="#A8A8A8"/><path d="M201.5 664.7V663.8A5.7 5.7 0 0 1 212.9 663.8V664.7Z" fill="#3A7FF4"/><rect x="237" y="679.9" width="57.2" height="33.1" rx="5.5" fill="#FAFAFA" stroke="#A9A9A9" stroke-width="1.75"/><path d="M249.7 679.1V680A6.9 6.9 0 0 0 263.5 680V679.1Z" fill="#A8A8A8"/><path d="M250.9 679.1V680A5.7 5.7 0 0 0 262.3 680V679.1Z" fill="#3A7FF4"/><path d="M267.7 679.1V680A6.9 6.9 0 0 0 281.5 680V679.1Z" fill="#A8A8A8"/><path d="M268.9 679.1V680A5.7 5.7 0 0 0 280.3 680V679.1Z" fill="#3A7FF4"/><path d="M249.7 713.8V712.9A6.9 6.9 0 0 1 263.5 712.9V713.8Z" fill="#A8A8A8"/><path d="M250.9 713.8V712.9A5.7 5.7 0 0 1 262.3 712.9V713.8Z" fill="#3A7FF4"/><rect x="220.3" y="743.9" width="121.6" height="33.1" rx="5.5" fill="#E5E5E5" stroke="#A9A9A9" stroke-width="1.75"/><path d="M340.4 745.9L334.3 751.7V769.1L340.4 774.9Z" fill="#C8C8C8"/><path d="M232.9 743.1V744A6.9 6.9 0 0 0 246.7 744V743.1Z" fill="#A8A8A8"/><path d="M234.1 743.1V744A5.7 5.7 0 0 0 245.5 744V743.1Z" fill="#3A7FF4"/><path d="M232.9 777.8V776.9A6.9 6.9 0 0 1 246.7 776.9V777.8Z" fill="#A8A8A8"/><path d="M234.1 777.8V776.9A5.7 5.7 0 0 1 245.5 776.9V777.8Z" fill="#3A7FF4"/><rect x="187.6" y="825.9" width="164" height="33.1" rx="5.5" fill="#E5E5E5" stroke="#A9A9A9" stroke-width="1.75"/><path d="M350.1 827.9L344 833.7V851.1L350.1 856.9Z" fill="#C8C8C8"/><path d="M200.3 825.1V826A6.9 6.9 0 0 0 214.1 826V825.1Z" fill="#A8A8A8"/><path d="M201.5 825.1V826A5.7 5.7 0 0 0 212.9 826V825.1Z" fill="#3A7FF4"/><path d="M200.3 859.8V858.9A6.9 6.9 0 0 1 214.1 858.9V859.8Z" fill="#A8A8A8"/><path d="M201.5 859.8V858.9A5.7 5.7 0 0 1 212.9 858.9V859.8Z" fill="#3A7FF4"/><rect x="187.6" y="876.4" width="226.1" height="33" rx="5.5" fill="#FAFAFA" stroke="#A9A9A9" stroke-width="1.75"/><path d="M200.3 875.6V876.5A6.9 6.9 0 0 0 214.1 876.5V875.6Z" fill="#A8A8A8"/><path d="M201.5 875.6V876.5A5.7 5.7 0 0 0 212.9 876.5V875.6Z" fill="#3A7FF4"/><path d="M200.3 910.2V909.3A6.9 6.9 0 0 1 214.1 909.3V910.2Z" fill="#A8A8A8"/><path d="M201.5 910.2V909.3A5.7 5.7 0 0 1 212.9 909.3V910.2Z" fill="#3A7FF4"/><rect x="395.5" y="514.8" width="167.8" height="32.6" rx="5.5" fill="#E5E5E5" stroke="#A9A9A9" stroke-width="1.75"/><path d="M561.8 516.8L555.7 522.6V539.5L561.8 545.3Z" fill="#C8C8C8"/><path d="M408.2 514V514.9A6.9 6.9 0 0 0 422 514.9V514Z" fill="#A8A8A8"/><path d="M409.4 514V514.9A5.7 5.7 0 0 0 420.8 514.9V514Z" fill="#3A7FF4"/><path d="M408.2 548.2V547.3A6.9 6.9 0 0 1 422 547.3V548.2Z" fill="#A8A8A8"/><path d="M409.4 548.2V547.3A5.7 5.7 0 0 1 420.8 547.3V548.2Z" fill="#3A7FF4"/><rect x="425.5" y="558.5" width="41" height="41.4" rx="5.5" fill="#E5E5E5" stroke="#A9A9A9" stroke-width="1.75"/><circle cx="446" cy="579.15" r="11.7" fill="none" stroke="#A8A8A8" stroke-width="2"/><path d="M437.9 557.7V558.6A6.9 6.9 0 0 0 451.7 558.6V557.7Z" fill="#A8A8A8"/><path d="M439.1 557.7V558.6A5.7 5.7 0 0 0 450.5 558.6V557.7Z" fill="#3A7FF4"/><path d="M437.9 600.7V599.8A6.9 6.9 0 0 1 451.7 599.8V600.7Z" fill="#A8A8A8"/><path d="M439.1 600.7V599.8A5.7 5.7 0 0 1 450.5 599.8V600.7Z" fill="#3A7FF4"/><rect x="425.5" y="630.8" width="111.3" height="33.1" rx="5.5" fill="#FAFAFA" stroke="#A9A9A9" stroke-width="1.75"/><path d="M437.9 630V630.9A6.9 6.9 0 0 0 451.7 630.9V630Z" fill="#A8A8A8"/><path d="M439.1 630V630.9A5.7 5.7 0 0 0 450.5 630.9V630Z" fill="#3A7FF4"/><path d="M437.9 664.7V663.8A6.9 6.9 0 0 1 451.7 663.8V664.7Z" fill="#A8A8A8"/><path d="M439.1 664.7V663.8A5.7 5.7 0 0 1 450.5 663.8V664.7Z" fill="#3A7FF4"/><rect x="474.4" y="679.9" width="57.2" height="33.1" rx="5.5" fill="#FAFAFA" stroke="#A9A9A9" stroke-width="1.75"/><path d="M487.1 679.1V680A6.9 6.9 0 0 0 500.9 680V679.1Z" fill="#A8A8A8"/><path d="M488.3 679.1V680A5.7 5.7 0 0 0 499.7 680V679.1Z" fill="#3A7FF4"/><path d="M505.1 679.1V680A6.9 6.9 0 0 0 518.9 680V679.1Z" fill="#A8A8A8"/><path d="M506.3 679.1V680A5.7 5.7 0 0 0 517.7 680V679.1Z" fill="#3A7FF4"/><path d="M487.1 713.8V712.9A6.9 6.9 0 0 1 500.9 712.9V713.8Z" fill="#A8A8A8"/><path d="M488.3 713.8V712.9A5.7 5.7 0 0 1 499.7 712.9V713.8Z" fill="#3A7FF4"/><rect x="461.3" y="743.9" width="121.2" height="33.1" rx="5.5" fill="#E5E5E5" stroke="#A9A9A9" stroke-width="1.75"/><path d="M581 745.9L574.9 751.7V769.1L581 774.9Z" fill="#C8C8C8"/><path d="M473.7 743.1V744A6.9 6.9 0 0 0 487.5 744V743.1Z" fill="#A8A8A8"/><path d="M474.9 743.1V744A5.7 5.7 0 0 0 486.3 744V743.1Z" fill="#3A7FF4"/><path d="M473.7 777.8V776.9A6.9 6.9 0 0 1 487.5 776.9V777.8Z" fill="#A8A8A8"/><path d="M474.9 777.8V776.9A5.7 5.7 0 0 1 486.3 776.9V777.8Z" fill="#3A7FF4"/><rect x="425.5" y="825.9" width="163.8" height="33.1" rx="5.5" fill="#E5E5E5" stroke="#A9A9A9" stroke-width="1.75"/><path d="M587.8 827.9L581.7 833.7V851.1L587.8 856.9Z" fill="#C8C8C8"/><path d="M438 825.1V826A6.9 6.9 0 0 0 451.8 826V825.1Z" fill="#A8A8A8"/><path d="M439.2 825.1V826A5.7 5.7 0 0 0 450.6 826V825.1Z" fill="#3A7FF4"/><path d="M438 859.8V858.9A6.9 6.9 0 0 1 451.8 858.9V859.8Z" fill="#A8A8A8"/><path d="M439.2 859.8V858.9A5.7 5.7 0 0 1 450.6 858.9V859.8Z" fill="#3A7FF4"/><rect x="425.5" y="876.4" width="225.9" height="33" rx="5.5" fill="#FAFAFA" stroke="#A9A9A9" stroke-width="1.75"/><path d="M438 875.6V876.5A6.9 6.9 0 0 0 451.8 876.5V875.6Z" fill="#A8A8A8"/><path d="M439.2 875.6V876.5A5.7 5.7 0 0 0 450.6 876.5V875.6Z" fill="#3A7FF4"/><path d="M438 910.2V909.3A6.9 6.9 0 0 1 451.8 909.3V910.2Z" fill="#A8A8A8"/><path d="M439.2 910.2V909.3A5.7 5.7 0 0 1 450.6 909.3V910.2Z" fill="#3A7FF4"/><rect x="669.3" y="578.3" width="218.2" height="28.2" rx="5.5" fill="#E5E5E5" stroke="#A9A9A9" stroke-width="1.75"/><rect x="841.9" y="579.9" width="6.6" height="24.9" rx="3" fill="#4A4A4A"/><path d="M681.9 577.5V578.4A6.9 6.9 0 0 0 695.7 578.4V577.5Z" fill="#A8A8A8"/><path d="M683.1 577.5V578.4A5.7 5.7 0 0 0 694.5 578.4V577.5Z" fill="#3A7FF4"/><path d="M681.9 607.3V606.4A6.9 6.9 0 0 1 695.7 606.4V607.3Z" fill="#A8A8A8"/><path d="M683.1 607.3V606.4A5.7 5.7 0 0 1 694.5 606.4V607.3Z" fill="#3A7FF4"/><rect x="669.3" y="621" width="77.1" height="30.1" rx="5.5" fill="#E5E5E5" stroke="#A9A9A9" stroke-width="1.75"/><path d="M675 627.3L683.1 636L675 643.1Z" fill="#A8A8A8"/><path d="M681.9 620.2V621.1A6.9 6.9 0 0 0 695.7 621.1V620.2Z" fill="#A8A8A8"/><path d="M683.1 620.2V621.1A5.7 5.7 0 0 0 694.5 621.1V620.2Z" fill="#3A7FF4"/><path d="M681.9 651.9V651A6.9 6.9 0 0 1 695.7 651V651.9Z" fill="#A8A8A8"/><path d="M683.1 651.9V651A5.7 5.7 0 0 1 694.5 651V651.9Z" fill="#3A7FF4"/><rect x="759.4" y="621" width="77.2" height="30.1" rx="5.5" fill="#E5E5E5" stroke="#A9A9A9" stroke-width="1.75"/><path d="M765.1 627.3L773.2 636L765.1 643.1Z" fill="#A8A8A8"/><path d="M772 620.2V621.1A6.9 6.9 0 0 0 785.8 621.1V620.2Z" fill="#A8A8A8"/><path d="M773.2 620.2V621.1A5.7 5.7 0 0 0 784.6 621.1V620.2Z" fill="#3A7FF4"/><path d="M772 651.9V651A6.9 6.9 0 0 1 785.8 651V651.9Z" fill="#A8A8A8"/><path d="M773.2 651.9V651A5.7 5.7 0 0 1 784.6 651V651.9Z" fill="#3A7FF4"/><rect x="630.2" y="670.4" width="116.2" height="32.9" rx="5.5" fill="#FAFAFA" stroke="#A9A9A9" stroke-width="1.75"/><path d="M642.6 669.6V670.5A6.9 6.9 0 0 0 656.4 670.5V669.6Z" fill="#A8A8A8"/><path d="M643.8 669.6V670.5A5.7 5.7 0 0 0 655.2 670.5V669.6Z" fill="#F08C2E"/><path d="M680.1 669.6V670.5A6.9 6.9 0 0 0 693.9 670.5V669.6Z" fill="#A8A8A8"/><path d="M681.3 669.6V670.5A5.7 5.7 0 0 0 692.7 670.5V669.6Z" fill="#F08C2E"/><path d="M719.5 669.6V670.5A6.9 6.9 0 0 0 733.3 670.5V669.6Z" fill="#A8A8A8"/><path d="M720.7 669.6V670.5A5.7 5.7 0 0 0 732.1 670.5V669.6Z" fill="#F08C2E"/><path d="M642.6 704.1V703.2A6.9 6.9 0 0 1 656.4 703.2V704.1Z" fill="#A8A8A8"/><path d="M643.8 704.1V703.2A5.7 5.7 0 0 1 655.2 703.2V704.1Z" fill="#F08C2E"/><path d="M667.2 704.1V703.2A6.9 6.9 0 0 1 681 703.2V704.1Z" fill="#A8A8A8"/><path d="M668.4 704.1V703.2A5.7 5.7 0 0 1 679.8 703.2V704.1Z" fill="#F08C2E"/><path d="M693.6 704.1V703.2A6.9 6.9 0 0 1 707.4 703.2V704.1Z" fill="#A8A8A8"/><path d="M694.8 704.1V703.2A5.7 5.7 0 0 1 706.2 703.2V704.1Z" fill="#F08C2E"/><path d="M719.5 704.1V703.2A6.9 6.9 0 0 1 733.3 703.2V704.1Z" fill="#A8A8A8"/><path d="M720.7 704.1V703.2A5.7 5.7 0 0 1 732.1 703.2V704.1Z" fill="#F08C2E"/><rect x="918.7" y="537.6" width="86.6" height="32.6" rx="5.5" fill="#FAFAFA" stroke="#A9A9A9" stroke-width="1.75"/><path d="M931 536.8V537.7A6.9 6.9 0 0 0 944.8 537.7V536.8Z" fill="#A8A8A8"/><path d="M932.2 536.8V537.7A5.7 5.7 0 0 0 943.6 537.7V536.8Z" fill="#3A7FF4"/><path d="M954.1 536.8V537.7A6.9 6.9 0 0 0 967.9 537.7V536.8Z" fill="#A8A8A8"/><path d="M955.3 536.8V537.7A5.7 5.7 0 0 0 966.7 537.7V536.8Z" fill="#3A7FF4"/><path d="M978.8 536.8V537.7A6.9 6.9 0 0 0 992.6 537.7V536.8Z" fill="#A8A8A8"/><path d="M980 536.8V537.7A5.7 5.7 0 0 0 991.4 537.7V536.8Z" fill="#3A7FF4"/><path d="M931 571V570.1A6.9 6.9 0 0 1 944.8 570.1V571Z" fill="#A8A8A8"/><path d="M932.2 571V570.1A5.7 5.7 0 0 1 943.6 570.1V571Z" fill="#3A7FF4"/><rect x="919.7" y="578.8" width="218.8" height="27.5" rx="5.5" fill="#E5E5E5" stroke="#A9A9A9" stroke-width="1.75"/><rect x="1128.3" y="580.4" width="6.6" height="24.2" rx="3" fill="#4A4A4A"/><path d="M932.7 578V578.9A6.9 6.9 0 0 0 946.5 578.9V578Z" fill="#A8A8A8"/><path d="M933.9 578V578.9A5.7 5.7 0 0 0 945.3 578.9V578Z" fill="#3A7FF4"/><path d="M932.7 607.1V606.2A6.9 6.9 0 0 1 946.5 606.2V607.1Z" fill="#A8A8A8"/><path d="M933.9 607.1V606.2A5.7 5.7 0 0 1 945.3 606.2V607.1Z" fill="#3A7FF4"/><rect x="920.1" y="621.3" width="76.9" height="29.3" rx="5.5" fill="#E5E5E5" stroke="#A9A9A9" stroke-width="1.75"/><path d="M925.8 627.6L933.9 635.9L925.8 642.6Z" fill="#A8A8A8"/><path d="M932.7 620.5V621.4A6.9 6.9 0 0 0 946.5 621.4V620.5Z" fill="#A8A8A8"/><path d="M933.9 620.5V621.4A5.7 5.7 0 0 0 945.3 621.4V620.5Z" fill="#3A7FF4"/><path d="M932.7 651.4V650.5A6.9 6.9 0 0 1 946.5 650.5V651.4Z" fill="#A8A8A8"/><path d="M933.9 651.4V650.5A5.7 5.7 0 0 1 945.3 650.5V651.4Z" fill="#3A7FF4"/><rect x="1010.5" y="621.3" width="77" height="29.3" rx="5.5" fill="#E5E5E5" stroke="#A9A9A9" stroke-width="1.75"/><path d="M1016.2 627.6L1024.3 635.9L1016.2 642.6Z" fill="#A8A8A8"/><path d="M1022.8 620.5V621.4A6.9 6.9 0 0 0 1036.6 621.4V620.5Z" fill="#A8A8A8"/><path d="M1024 620.5V621.4A5.7 5.7 0 0 0 1035.4 621.4V620.5Z" fill="#3A7FF4"/><path d="M1022.8 651.4V650.5A6.9 6.9 0 0 1 1036.6 650.5V651.4Z" fill="#A8A8A8"/><path d="M1024 651.4V650.5A5.7 5.7 0 0 1 1035.4 650.5V651.4Z" fill="#3A7FF4"/><rect x="880.8" y="670.5" width="116.2" height="32.5" rx="5.5" fill="#FAFAFA" stroke="#A9A9A9" stroke-width="1.75"/><path d="M893.1 669.7V670.6A6.9 6.9 0 0 0 906.9 670.6V669.7Z" fill="#A8A8A8"/><path d="M894.3 669.7V670.6A5.7 5.7 0 0 0 905.7 670.6V669.7Z" fill="#F08C2E"/><path d="M931 669.7V670.6A6.9 6.9 0 0 0 944.8 670.6V669.7Z" fill="#A8A8A8"/><path d="M932.2 669.7V670.6A5.7 5.7 0 0 0 943.6 670.6V669.7Z" fill="#F08C2E"/><path d="M970.2 669.7V670.6A6.9 6.9 0 0 0 984 670.6V669.7Z" fill="#A8A8A8"/><path d="M971.4 669.7V670.6A5.7 5.7 0 0 0 982.8 670.6V669.7Z" fill="#F08C2E"/><path d="M893.1 703.8V702.9A6.9 6.9 0 0 1 906.9 702.9V703.8Z" fill="#A8A8A8"/><path d="M894.3 703.8V702.9A5.7 5.7 0 0 1 905.7 702.9V703.8Z" fill="#F08C2E"/><path d="M918.1 703.8V702.9A6.9 6.9 0 0 1 931.9 702.9V703.8Z" fill="#A8A8A8"/><path d="M919.3 703.8V702.9A5.7 5.7 0 0 1 930.7 702.9V703.8Z" fill="#F08C2E"/><path d="M944.1 703.8V702.9A6.9 6.9 0 0 1 957.9 702.9V703.8Z" fill="#A8A8A8"/><path d="M945.3 703.8V702.9A5.7 5.7 0 0 1 956.7 702.9V703.8Z" fill="#F08C2E"/><path d="M970.2 703.8V702.9A6.9 6.9 0 0 1 984 702.9V703.8Z" fill="#A8A8A8"/><path d="M971.4 703.8V702.9A5.7 5.7 0 0 1 982.8 702.9V703.8Z" fill="#F08C2E"/><rect x="630.3" y="747.7" width="257.1" height="32.7" rx="5.5" fill="#FAFAFA" stroke="#A9A9A9" stroke-width="1.75"/><path d="M642.6 746.9V747.8A6.9 6.9 0 0 0 656.4 747.8V746.9Z" fill="#A8A8A8"/><path d="M643.8 746.9V747.8A5.7 5.7 0 0 0 655.2 747.8V746.9Z" fill="#F08C2E"/><path d="M642.6 781.2V780.3A6.9 6.9 0 0 1 656.4 780.3V781.2Z" fill="#A8A8A8"/><path d="M643.8 781.2V780.3A5.7 5.7 0 0 1 655.2 780.3V781.2Z" fill="#F08C2E"/><rect x="630.3" y="816.5" width="107.8" height="32.4" rx="5.5" fill="#FAFAFA" stroke="#A9A9A9" stroke-width="1.75"/><path d="M642.6 815.7V816.6A6.9 6.9 0 0 0 656.4 816.6V815.7Z" fill="#A8A8A8"/><path d="M643.8 815.7V816.6A5.7 5.7 0 0 0 655.2 816.6V815.7Z" fill="#F08C2E"/><path d="M642.6 849.7V848.8A6.9 6.9 0 0 1 656.4 848.8V849.7Z" fill="#A8A8A8"/><path d="M643.8 849.7V848.8A5.7 5.7 0 0 1 655.2 848.8V849.7Z" fill="#F08C2E"/><rect x="744.7" y="816.5" width="108.1" height="32.4" rx="5.5" fill="#FAFAFA" stroke="#A9A9A9" stroke-width="1.75"/><path d="M757.4 815.7V816.6A6.9 6.9 0 0 0 771.2 816.6V815.7Z" fill="#A8A8A8"/><path d="M758.6 815.7V816.6A5.7 5.7 0 0 0 770 816.6V815.7Z" fill="#F08C2E"/><path d="M757.4 849.7V848.8A6.9 6.9 0 0 1 771.2 848.8V849.7Z" fill="#A8A8A8"/><path d="M758.6 849.7V848.8A5.7 5.7 0 0 1 770 848.8V849.7Z" fill="#F08C2E"/><rect x="832" y="872" width="88.1" height="32.5" rx="5.5" fill="#FAFAFA" stroke="#A9A9A9" stroke-width="1.75"/><path d="M844.1 871.2V872.1A6.9 6.9 0 0 0 857.9 872.1V871.2Z" fill="#A8A8A8"/><path d="M845.3 871.2V872.1A5.7 5.7 0 0 0 856.7 872.1V871.2Z" fill="#F08C2E"/><path d="M868.8 871.2V872.1A6.9 6.9 0 0 0 882.6 872.1V871.2Z" fill="#A8A8A8"/><path d="M870 871.2V872.1A5.7 5.7 0 0 0 881.4 872.1V871.2Z" fill="#F08C2E"/><path d="M893.3 871.2V872.1A6.9 6.9 0 0 0 907.1 872.1V871.2Z" fill="#A8A8A8"/><path d="M894.5 871.2V872.1A5.7 5.7 0 0 0 905.9 872.1V871.2Z" fill="#F08C2E"/><path d="M844.1 905.3V904.4A6.9 6.9 0 0 1 857.9 904.4V905.3Z" fill="#A8A8A8"/><path d="M845.3 905.3V904.4A5.7 5.7 0 0 1 856.7 904.4V905.3Z" fill="#F08C2E"/><rect x="862.5" y="914.5" width="218.8" height="27.8" rx="5.5" fill="#E5E5E5" stroke="#A9A9A9" stroke-width="1.75"/><rect x="1041.9" y="916.1" width="6.6" height="24.5" rx="3" fill="#4A4A4A"/><path d="M875.2 913.7V914.6A6.9 6.9 0 0 0 889 914.6V913.7Z" fill="#A8A8A8"/><path d="M876.4 913.7V914.6A5.7 5.7 0 0 0 887.8 914.6V913.7Z" fill="#3A7FF4"/><path d="M875.2 943.1V942.2A6.9 6.9 0 0 1 889 942.2V943.1Z" fill="#A8A8A8"/><path d="M876.4 943.1V942.2A5.7 5.7 0 0 1 887.8 942.2V943.1Z" fill="#3A7FF4"/><rect x="862.5" y="957.2" width="77.5" height="29.1" rx="5.5" fill="#E5E5E5" stroke="#A9A9A9" stroke-width="1.75"/><path d="M868.2 963.5L876.3 971.7L868.2 978.3Z" fill="#A8A8A8"/><path d="M875.2 956.4V957.3A6.9 6.9 0 0 0 889 957.3V956.4Z" fill="#A8A8A8"/><path d="M876.4 956.4V957.3A5.7 5.7 0 0 0 887.8 957.3V956.4Z" fill="#3A7FF4"/><path d="M875.2 987.1V986.2A6.9 6.9 0 0 1 889 986.2V987.1Z" fill="#A8A8A8"/><path d="M876.4 987.1V986.2A5.7 5.7 0 0 1 887.8 986.2V987.1Z" fill="#3A7FF4"/><rect x="952.7" y="957.2" width="77.4" height="29.1" rx="5.5" fill="#E5E5E5" stroke="#A9A9A9" stroke-width="1.75"/><path d="M958.4 963.5L966.5 971.7L958.4 978.3Z" fill="#A8A8A8"/><path d="M965.5 956.4V957.3A6.9 6.9 0 0 0 979.3 957.3V956.4Z" fill="#A8A8A8"/><path d="M966.7 956.4V957.3A5.7 5.7 0 0 0 978.1 957.3V956.4Z" fill="#3A7FF4"/><path d="M965.5 987.1V986.2A6.9 6.9 0 0 1 979.3 986.2V987.1Z" fill="#A8A8A8"/><path d="M966.7 987.1V986.2A5.7 5.7 0 0 1 978.1 986.2V987.1Z" fill="#3A7FF4"/><rect x="831.5" y="1001.5" width="116.5" height="32.7" rx="5.5" fill="#FAFAFA" stroke="#A9A9A9" stroke-width="1.75"/><path d="M844.2 1000.7V1001.6A6.9 6.9 0 0 0 858 1001.6V1000.7Z" fill="#A8A8A8"/><path d="M845.4 1000.7V1001.6A5.7 5.7 0 0 0 856.8 1001.6V1000.7Z" fill="#F08C2E"/><path d="M881.7 1000.7V1001.6A6.9 6.9 0 0 0 895.5 1001.6V1000.7Z" fill="#A8A8A8"/><path d="M882.9 1000.7V1001.6A5.7 5.7 0 0 0 894.3 1001.6V1000.7Z" fill="#F08C2E"/><path d="M921.1 1000.7V1001.6A6.9 6.9 0 0 0 934.9 1001.6V1000.7Z" fill="#A8A8A8"/><path d="M922.3 1000.7V1001.6A5.7 5.7 0 0 0 933.7 1001.6V1000.7Z" fill="#F08C2E"/><path d="M844.2 1035V1034.1A6.9 6.9 0 0 1 858 1034.1V1035Z" fill="#A8A8A8"/><path d="M845.4 1035V1034.1A5.7 5.7 0 0 1 856.8 1034.1V1035Z" fill="#F08C2E"/><path d="M868.7 1035V1034.1A6.9 6.9 0 0 1 882.5 1034.1V1035Z" fill="#A8A8A8"/><path d="M869.9 1035V1034.1A5.7 5.7 0 0 1 881.3 1034.1V1035Z" fill="#F08C2E"/><path d="M895 1035V1034.1A6.9 6.9 0 0 1 908.8 1034.1V1035Z" fill="#A8A8A8"/><path d="M896.2 1035V1034.1A5.7 5.7 0 0 1 907.6 1034.1V1035Z" fill="#F08C2E"/><path d="M921.1 1035V1034.1A6.9 6.9 0 0 1 934.9 1034.1V1035Z" fill="#A8A8A8"/><path d="M922.3 1035V1034.1A5.7 5.7 0 0 1 933.7 1034.1V1035Z" fill="#F08C2E"/><rect x="831.4" y="1068.4" width="143" height="33" rx="5.5" fill="#FAFAFA" stroke="#A9A9A9" stroke-width="1.75"/><path d="M844.2 1067.6V1068.5A6.9 6.9 0 0 0 858 1068.5V1067.6Z" fill="#A8A8A8"/><path d="M845.4 1067.6V1068.5A5.7 5.7 0 0 0 856.8 1068.5V1067.6Z" fill="#F08C2E"/><path d="M894.8 1067.6V1068.5A6.9 6.9 0 0 0 908.6 1068.5V1067.6Z" fill="#A8A8A8"/><path d="M896 1067.6V1068.5A5.7 5.7 0 0 0 907.4 1068.5V1067.6Z" fill="#3A7FF4"/><path d="M947.4 1067.6V1068.5A6.9 6.9 0 0 0 961.2 1068.5V1067.6Z" fill="#A8A8A8"/><path d="M948.6 1067.6V1068.5A5.7 5.7 0 0 0 960 1068.5V1067.6Z" fill="#3A7FF4"/><path d="M844.2 1102.2V1101.3A6.9 6.9 0 0 1 858 1101.3V1102.2Z" fill="#A8A8A8"/><path d="M845.4 1102.2V1101.3A5.7 5.7 0 0 1 856.8 1101.3V1102.2Z" fill="#F08C2E"/><rect x="993.7" y="1068.4" width="41.5" height="40.9" rx="5.5" fill="#E5E5E5" stroke="#A9A9A9" stroke-width="1.75"/><path d="M1002.3 1077.1L1026.6 1100.7M1026.6 1077.1L1002.3 1100.7" stroke="#C6C6C6" stroke-width="2.6"/><path d="M1006.7 1067.6V1068.5A6.9 6.9 0 0 0 1020.5 1068.5V1067.6Z" fill="#A8A8A8"/><path d="M1007.9 1067.6V1068.5A5.7 5.7 0 0 0 1019.3 1068.5V1067.6Z" fill="#3A7FF4"/><path d="M1006.7 1110.1V1109.2A6.9 6.9 0 0 1 1020.5 1109.2V1110.1Z" fill="#A8A8A8"/><path d="M1007.9 1110.1V1109.2A5.7 5.7 0 0 1 1019.3 1109.2V1110.1Z" fill="#3A7FF4"/><rect x="977.5" y="1134.2" width="57.4" height="32.4" rx="5.5" fill="#FAFAFA" stroke="#A9A9A9" stroke-width="1.75"/><path d="M989.9 1133.4V1134.3A6.9 6.9 0 0 0 1003.7 1134.3V1133.4Z" fill="#A8A8A8"/><path d="M991.1 1133.4V1134.3A5.7 5.7 0 0 0 1002.5 1134.3V1133.4Z" fill="#F08C2E"/><path d="M1007.9 1133.4V1134.3A6.9 6.9 0 0 0 1021.7 1134.3V1133.4Z" fill="#A8A8A8"/><path d="M1009.1 1133.4V1134.3A5.7 5.7 0 0 0 1020.5 1134.3V1133.4Z" fill="#F08C2E"/><path d="M989.9 1167.4V1166.5A6.9 6.9 0 0 1 1003.7 1166.5V1167.4Z" fill="#A8A8A8"/><path d="M991.1 1167.4V1166.5A5.7 5.7 0 0 1 1002.5 1166.5V1167.4Z" fill="#F08C2E"/><rect x="979.1" y="1206.2" width="68.6" height="32.7" rx="5.5" fill="#FAFAFA" stroke="#A9A9A9" stroke-width="1.75"/><path d="M991.4 1205.4V1206.3A6.9 6.9 0 0 0 1005.2 1206.3V1205.4Z" fill="#A8A8A8"/><path d="M992.6 1205.4V1206.3A5.7 5.7 0 0 0 1004 1206.3V1205.4Z" fill="#F08C2E"/><path d="M1021.3 1205.4V1206.3A6.9 6.9 0 0 0 1035.1 1206.3V1205.4Z" fill="#A8A8A8"/><path d="M1022.5 1205.4V1206.3A5.7 5.7 0 0 0 1033.9 1206.3V1205.4Z" fill="#F08C2E"/><rect x="1096.8" y="747.3" width="313.5" height="301.5" rx="5.5" fill="#E5E5E5" stroke="#A9A9A9" stroke-width="1.75"/><path d="M1135.8 748.6V1047.4" stroke="#A9A9A9" stroke-width="1.6"/><path d="M1175.1 748.6V1047.4" stroke="#A9A9A9" stroke-width="1.6"/><path d="M1214.2 748.6V1047.4" stroke="#A9A9A9" stroke-width="1.6"/><path d="M1253.6 748.6V1047.4" stroke="#A9A9A9" stroke-width="1.6"/><path d="M1292.9 748.6V1047.4" stroke="#A9A9A9" stroke-width="1.6"/><path d="M1332.2 748.6V1047.4" stroke="#A9A9A9" stroke-width="1.6"/><path d="M1371.6 748.6V1047.4" stroke="#A9A9A9" stroke-width="1.6"/><path d="M1098.2 822.1H1408.9" stroke="#A9A9A9" stroke-width="1.6"/><path d="M1098.2 898H1408.9" stroke="#A9A9A9" stroke-width="1.6"/><path d="M1098.2 973.9H1408.9" stroke="#A9A9A9" stroke-width="1.6"/><path d="M1161.21 883.77L1165.67 865.89L1173.54 849.23L1184.51 834.42L1198.15 822.04L1213.95 812.55L1231.3 806.33L1249.53 803.62L1267.93 804.51L1285.81 808.97L1302.47 816.84L1317.28 827.81L1329.66 841.45L1339.15 857.25L1345.37 874.6L1348.08 892.83L1347.19 911.23M1161.21 883.77L1165.53 866.84L1173.27 851.1L1184.11 837.13L1197.64 825.49L1213.35 816.61L1230.63 810.85L1248.82 808.41L1267.21 809.4L1285.1 813.77L1301.81 821.36L1316.68 831.87L1329.15 844.91L1338.75 859.97L1345.09 876.47L1347.94 893.78L1347.19 911.23M1161.21 883.77L1165.38 867.89L1172.96 853.15L1183.67 840.11L1197.09 829.28L1212.7 821.07L1229.9 815.8L1248.04 813.66L1266.42 814.75L1284.33 819.02L1301.08 826.31L1316.02 836.33L1328.6 848.7L1338.31 862.95L1344.79 878.52L1347.79 894.82L1347.19 911.23M1161.21 883.77L1165.21 869.02L1172.63 855.37L1183.19 843.34L1196.48 833.39L1211.98 825.91L1229.11 821.17L1247.2 819.37L1265.56 820.57L1283.48 824.73L1300.28 831.68L1315.31 841.17L1327.99 852.81L1337.83 866.18L1344.46 880.75L1347.62 895.96L1347.19 911.23M1161.21 883.77L1165.03 870.25L1172.28 857.77L1182.68 846.82L1195.82 837.82L1211.21 831.12L1228.25 826.96L1246.29 825.51L1264.63 826.83L1282.58 830.87L1299.43 837.47L1314.54 846.37L1327.33 857.24L1337.32 869.66L1344.11 883.14L1347.44 897.18L1347.19 911.23M1161.21 883.77L1164.84 871.55L1171.9 860.33L1182.13 850.54L1195.13 842.55L1210.39 836.67L1227.34 833.13L1245.32 832.07L1263.65 833.52L1281.61 837.43L1298.52 843.64L1313.72 851.93L1326.64 861.97L1336.77 873.37L1343.73 885.7L1347.25 898.49L1347.19 911.23M1161.21 883.77L1164.63 872.93L1171.5 863.04L1181.55 854.47L1194.39 847.55L1209.52 842.55L1226.38 839.67L1244.3 839.01L1262.6 840.59L1280.58 844.36L1297.55 850.18L1312.85 857.81L1325.9 866.97L1336.19 877.3L1343.33 888.41L1347.04 899.87L1347.19 911.23M1161.21 883.77L1164.42 874.38L1171.08 865.88L1180.94 858.59L1193.61 852.8L1208.61 848.73L1225.36 846.53L1243.22 846.29L1261.51 848.02L1279.51 851.65L1296.54 857.04L1311.94 863.99L1325.12 872.22L1335.58 881.43L1342.91 891.25L1346.83 901.31L1347.19 911.23M1161.21 883.77L1164.2 875.89L1170.65 868.84L1180.3 862.89L1192.8 858.28L1207.66 855.17L1224.31 853.69L1242.1 853.89L1260.36 855.76L1278.39 859.24L1295.48 864.2L1310.99 870.43L1324.31 877.7L1334.94 885.73L1342.47 894.21L1346.61 902.83L1347.19 911.23M1161.21 883.77L1163.97 877.45L1170.19 871.91L1179.65 867.35L1191.97 863.94L1206.68 861.83L1223.21 861.09L1240.94 861.75L1259.18 863.78L1277.23 867.1L1294.39 871.6L1310 877.09L1323.48 883.36L1334.29 890.18L1342.02 897.28L1346.38 904.39L1347.19 911.23M1161.21 883.77L1163.73 879.06L1169.73 875.06L1178.97 871.92L1191.11 869.77L1205.67 868.68L1222.09 868.7L1239.75 869.82L1257.96 872.01L1276.03 875.18L1293.26 879.21L1308.99 883.93L1322.62 889.19L1333.61 894.76L1341.55 900.43L1346.14 906L1347.19 911.23M1161.21 883.77L1163.49 880.7L1169.25 878.27L1178.28 876.59L1190.23 875.71L1204.63 875.66L1220.94 876.46L1238.53 878.06L1256.72 880.41L1274.82 883.42L1292.12 886.97L1307.96 890.92L1321.74 895.13L1332.92 899.42L1341.08 903.65L1345.9 907.63L1347.19 911.23M1161.21 883.77L1163.24 882.36L1168.77 881.53L1177.58 881.32L1189.34 881.73L1203.59 882.74L1219.78 884.32L1237.3 886.41L1255.47 888.93L1273.58 891.77L1290.96 894.83L1306.92 898L1320.85 901.15L1332.22 904.15L1340.6 906.91L1345.65 909.3L1347.19 911.23M1161.21 883.77L1163 884.03L1168.29 884.81L1176.88 886.08L1188.45 887.79L1202.54 889.87L1218.61 892.25L1236.06 894.82L1254.2 897.5L1272.34 900.18L1289.79 902.75L1305.86 905.13L1319.95 907.21L1331.52 908.92L1340.11 910.19L1345.4 910.97L1347.19 911.23M1161.21 883.77L1162.75 885.7L1167.8 888.09L1176.18 890.85L1187.55 893.85L1201.48 897L1217.44 900.17L1234.82 903.23L1252.93 906.07L1271.1 908.59L1288.62 910.68L1304.81 912.26L1319.06 913.27L1330.82 913.68L1339.63 913.47L1345.16 912.64L1347.19 911.23M1161.21 883.77L1162.5 887.37L1167.32 891.35L1175.48 895.58L1186.66 899.87L1200.44 904.08L1216.28 908.03L1233.58 911.58L1251.68 914.59L1269.87 916.94L1287.46 918.54L1303.77 919.34L1318.17 919.29L1330.12 918.41L1339.15 916.73L1344.91 914.3L1347.19 911.23M1161.21 883.77L1162.26 889L1166.85 894.57L1174.79 900.24L1185.78 905.81L1199.41 911.07L1215.14 915.79L1232.37 919.82L1250.44 922.99L1268.65 925.18L1286.31 926.3L1302.73 926.32L1317.29 925.23L1329.43 923.08L1338.67 919.94L1344.67 915.94L1347.19 911.23M1161.21 883.77L1162.02 890.61L1166.38 897.72L1174.11 904.82L1184.92 911.64L1198.4 917.91L1214.01 923.4L1231.17 927.9L1249.22 931.22L1267.46 933.25L1285.19 933.91L1301.72 933.17L1316.43 931.06L1328.75 927.65L1338.21 923.09L1344.43 917.55L1347.19 911.23M1161.21 883.77L1161.79 892.17L1165.93 900.79L1173.46 909.27L1184.09 917.3L1197.41 924.57L1212.92 930.8L1230.01 935.76L1248.04 939.24L1266.3 941.11L1284.09 941.31L1300.74 939.83L1315.6 936.72L1328.1 932.11L1337.75 926.16L1344.2 919.11L1347.19 911.23M1161.21 883.77L1161.57 893.69L1165.49 903.75L1172.82 913.57L1183.28 922.78L1196.46 931.01L1211.86 937.96L1228.89 943.35L1246.89 946.98L1265.18 948.71L1283.04 948.47L1299.79 946.27L1314.79 942.2L1327.46 936.41L1337.32 929.12L1343.98 920.62L1347.19 911.23M1161.21 883.77L1161.36 895.13L1165.07 906.59L1172.21 917.7L1182.5 928.03L1195.55 937.19L1210.85 944.82L1227.82 950.64L1245.8 954.41L1264.1 955.99L1282.02 955.33L1298.88 952.45L1314.01 947.45L1326.85 940.53L1336.9 931.96L1343.77 922.07L1347.19 911.23M1161.21 883.77L1161.15 896.51L1164.67 909.3L1171.63 921.63L1181.76 933.03L1194.68 943.07L1209.88 951.36L1226.79 957.57L1244.75 961.48L1263.08 962.93L1281.06 961.87L1298.01 958.33L1313.27 952.45L1326.27 944.46L1336.5 934.67L1343.56 923.45L1347.19 911.23M1161.21 883.77L1160.96 897.82L1164.29 911.86L1171.08 925.34L1181.07 937.76L1193.86 948.63L1208.97 957.53L1225.82 964.13L1243.77 968.17L1262.11 969.49L1280.15 968.04L1297.19 963.88L1312.58 957.18L1325.72 948.18L1336.12 937.23L1343.37 924.75L1347.19 911.23M1161.21 883.77L1160.78 899.04L1163.94 914.25L1170.57 928.82L1180.41 942.19L1193.09 953.83L1208.12 963.32L1224.92 970.27L1242.84 974.43L1261.2 975.63L1279.29 973.83L1296.42 969.09L1311.92 961.61L1325.21 951.66L1335.77 939.63L1343.19 925.98L1347.19 911.23M1161.21 883.77L1160.61 900.18L1163.61 916.48L1170.09 932.05L1179.8 946.3L1192.38 958.67L1207.32 968.69L1224.07 975.98L1241.98 980.25L1260.36 981.34L1278.5 979.2L1295.7 973.93L1311.31 965.72L1324.73 954.89L1335.44 941.85L1343.02 927.11L1347.19 911.23M1161.21 883.77L1160.46 901.22L1163.31 918.53L1169.65 935.03L1179.25 950.09L1191.72 963.13L1206.59 973.64L1223.3 981.23L1241.19 985.6L1259.58 986.59L1277.77 984.15L1295.05 978.39L1310.76 969.51L1324.29 957.87L1335.13 943.9L1342.87 928.16L1347.19 911.23M1161.21 883.77L1160.32 902.17L1163.03 920.4L1169.25 937.75L1178.74 953.55L1191.12 967.19L1205.93 978.16L1222.59 986.03L1240.47 990.49L1258.87 991.38L1277.1 988.67L1294.45 982.45L1310.25 972.96L1323.89 960.58L1334.86 945.77L1342.73 929.11L1347.19 911.23" fill="none" stroke="#4E4E4E" stroke-width="1.5" stroke-linejoin="round"/><path d="M1109.6 746.5V747.4A6.9 6.9 0 0 0 1123.4 747.4V746.5Z" fill="#A8A8A8"/><path d="M1110.8 746.5V747.4A5.7 5.7 0 0 0 1122.2 747.4V746.5Z" fill="#F08C2E"/><path d="M1383.5 746.5V747.4A6.9 6.9 0 0 0 1397.3 747.4V746.5Z" fill="#A8A8A8"/><path d="M1384.7 746.5V747.4A5.7 5.7 0 0 0 1396.1 747.4V746.5Z" fill="#F08C2E"/></svg>
<div class="tl"><div class="t" style="left:653.8px;top:306.3px;font-size:18.5px">106.</div><div class="t" style="left:640.6px;top:357.1px;font-size:21.8px">phasor~</div><div class="t" style="left:778.4px;width:80px;text-align:center;top:289px;font-size:19px">m1</div><div class="t" style="left:873.3px;width:80px;text-align:center;top:289px;font-size:19px">m2</div><div class="t" style="left:972.8px;width:80px;text-align:center;top:289px;font-size:19px">n1</div><div class="t" style="left:1067px;width:80px;text-align:center;top:289px;font-size:19px">n2</div><div class="t" style="left:1164.3px;width:80px;text-align:center;top:289px;font-size:19px">n3</div><div class="t" style="left:1248px;width:80px;text-align:center;top:289px;font-size:19px">a</div><div class="t" style="left:1342.2px;width:80px;text-align:center;top:289px;font-size:19px">b</div><div class="t" style="left:640.6px;top:478.6px;font-size:21.8px">superformula~</div><div class="t" style="left:887.6px;top:478.6px;font-size:21.8px">*~ 6.28319</div><div class="t" style="left:640.6px;top:531.2px;font-size:21.8px">pol2car~</div><div class="t" style="left:165.2px;top:521.2px;font-size:21.8px;letter-spacing:-0.2px">normalize 0.01</div><div class="t" style="left:198.6px;top:637.2px;font-size:21.8px">v counter</div><div class="t" style="left:247.5px;top:686.3px;font-size:21.8px">+ 1</div><div class="t" style="left:230.8px;top:750.3px;font-size:21.8px">set arr-&#36;1</div><div class="t" style="left:198.1px;top:832.3px;font-size:21.8px">rename arr-&#36;1</div><div class="t" style="left:198.1px;top:882.8px;font-size:21.8px">array define -k 16387</div><div class="t" style="left:406px;top:521.2px;font-size:21.8px;letter-spacing:-0.2px">normalize 0.01</div><div class="t" style="left:436px;top:637.2px;font-size:21.8px">v counter</div><div class="t" style="left:484.9px;top:686.3px;font-size:21.8px">+ 1</div><div class="t" style="left:471.8px;top:750.3px;font-size:21.8px">set arr-&#36;1</div><div class="t" style="left:436px;top:832.3px;font-size:21.8px">rename arr-&#36;1</div><div class="t" style="left:436px;top:882.8px;font-size:21.8px">array define -k 16387</div><div class="t" style="left:693px;top:627.6px;font-size:18.5px">104....</div><div class="t" style="left:783.1px;top:627.6px;font-size:18.5px">0.</div><div class="t" style="left:640.7px;top:676.8px;font-size:21.8px">svfilter~</div><div class="t" style="left:929.2px;top:544px;font-size:21.8px">lfo 1.8</div><div class="t" style="left:943.8px;top:627.9px;font-size:18.5px">125....</div><div class="t" style="left:1034.2px;top:627.9px;font-size:18.5px">0.</div><div class="t" style="left:891.3px;top:676.9px;font-size:21.8px">svfilter~</div><div class="t" style="left:640.8px;top:754.1px;font-size:21.8px">expr~ ((&#36;v1+1)/2)*16387</div><div class="t" style="left:640.8px;top:822.9px;font-size:21.8px">tabread~</div><div class="t" style="left:755.2px;top:822.9px;font-size:21.8px">tabread~</div><div class="t" style="left:842.5px;top:878.4px;font-size:21.8px">xfade~</div><div class="t" style="left:886.2px;top:963.8px;font-size:18.5px">800...</div><div class="t" style="left:976.4px;top:963.8px;font-size:18.5px">0.</div><div class="t" style="left:842px;top:1007.9px;font-size:21.8px">svfilter~</div><div class="t" style="left:841.9px;top:1074.8px;font-size:21.8px">clip~ -0.1 0.1</div><div class="t" style="left:988px;top:1140.6px;font-size:21.8px">*~</div><div class="t" style="left:989.6px;top:1212.6px;font-size:21.8px">dac~</div></div>
<svg class="a" style="left:0;top:0" width="2164" height="1400"><path d="M649.6 329.5L649.6 350.5" fill="none" stroke="#8C8C8C" stroke-width="4.2" stroke-linecap="round"/><path d="M649.6 329.5L649.6 350.5" fill="none" stroke="#C4C4C4" stroke-width="2.5" stroke-linecap="round"/><path d="M649.6 383.8L649.6 472" fill="none" stroke="#555555" stroke-width="4.2" stroke-linecap="round"/><path d="M649.6 383.8L649.6 472" fill="none" stroke="#BDBDBD" stroke-width="2.5" stroke-dasharray="9 7"/><path d="M649.6 383.8L649.6 448.8Q649.6 459.8 660.6 459.8L886.1 459.8Q897.1 459.8 897.1 470.8L897.1 472" fill="none" stroke="#555555" stroke-width="4.2" stroke-linecap="round"/><path d="M649.6 383.8L649.6 448.8Q649.6 459.8 660.6 459.8L886.1 459.8Q897.1 459.8 897.1 470.8L897.1 472" fill="none" stroke="#BDBDBD" stroke-width="2.5" stroke-dasharray="9 7"/><path d="M803.7 401.6L803.7 426Q803.7 437 792.7 437L688.4 437Q677.4 437 677.4 448L677.4 472" fill="none" stroke="#8C8C8C" stroke-width="4.2" stroke-linecap="round"/><path d="M803.7 401.6L803.7 426Q803.7 437 792.7 437L688.4 437Q677.4 437 677.4 448L677.4 472" fill="none" stroke="#C4C4C4" stroke-width="2.5" stroke-linecap="round"/><path d="M901.7 401.6L901.7 426Q901.7 437 890.7 437L716.3 437Q705.3 437 705.3 448L705.3 472" fill="none" stroke="#8C8C8C" stroke-width="4.2" stroke-linecap="round"/><path d="M901.7 401.6L901.7 426Q901.7 437 890.7 437L716.3 437Q705.3 437 705.3 448L705.3 472" fill="none" stroke="#C4C4C4" stroke-width="2.5" stroke-linecap="round"/><path d="M998.4 401.6L998.4 426Q998.4 437 987.4 437L744.1 437Q733.1 437 733.1 448L733.1 472" fill="none" stroke="#8C8C8C" stroke-width="4.2" stroke-linecap="round"/><path d="M998.4 401.6L998.4 426Q998.4 437 987.4 437L744.1 437Q733.1 437 733.1 448L733.1 472" fill="none" stroke="#C4C4C4" stroke-width="2.5" stroke-linecap="round"/><path d="M1093.7 401.6L1093.7 426Q1093.7 437 1082.7 437L772 437Q761 437 761 448L761 472" fill="none" stroke="#8C8C8C" stroke-width="4.2" stroke-linecap="round"/><path d="M1093.7 401.6L1093.7 426Q1093.7 437 1082.7 437L772 437Q761 437 761 448L761 472" fill="none" stroke="#C4C4C4" stroke-width="2.5" stroke-linecap="round"/><path d="M1190.3 401.6L1190.3 426Q1190.3 437 1179.3 437L799.9 437Q788.9 437 788.9 448L788.9 472" fill="none" stroke="#8C8C8C" stroke-width="4.2" stroke-linecap="round"/><path d="M1190.3 401.6L1190.3 426Q1190.3 437 1179.3 437L799.9 437Q788.9 437 788.9 448L788.9 472" fill="none" stroke="#C4C4C4" stroke-width="2.5" stroke-linecap="round"/><path d="M1280.4 401.6L1280.4 426Q1280.4 437 1269.4 437L827.7 437Q816.7 437 816.7 448L816.7 472" fill="none" stroke="#8C8C8C" stroke-width="4.2" stroke-linecap="round"/><path d="M1280.4 401.6L1280.4 426Q1280.4 437 1269.4 437L827.7 437Q816.7 437 816.7 448L816.7 472" fill="none" stroke="#C4C4C4" stroke-width="2.5" stroke-linecap="round"/><path d="M1374.3 401.6L1374.3 426Q1374.3 437 1363.3 437L855.6 437Q844.6 437 844.6 448L844.6 472" fill="none" stroke="#8C8C8C" stroke-width="4.2" stroke-linecap="round"/><path d="M1374.3 401.6L1374.3 426Q1374.3 437 1363.3 437L855.6 437Q844.6 437 844.6 448L844.6 472" fill="none" stroke="#C4C4C4" stroke-width="2.5" stroke-linecap="round"/><path d="M649.6 505L649.6 524.6" fill="none" stroke="#555555" stroke-width="4.2" stroke-linecap="round"/><path d="M649.6 505L649.6 524.6" fill="none" stroke="#BDBDBD" stroke-width="2.5" stroke-dasharray="9 7"/><path d="M897.1 505L897.1 506Q897.1 517 886.1 517L724.3 517Q716.7 517 716.7 524.6L716.7 524.6" fill="none" stroke="#555555" stroke-width="4.2" stroke-linecap="round"/><path d="M897.1 505L897.1 506Q897.1 517 886.1 517L724.3 517Q716.7 517 716.7 524.6L716.7 524.6" fill="none" stroke="#BDBDBD" stroke-width="2.5" stroke-dasharray="9 7"/><path d="M649.6 557.4L649.5 670.2" fill="none" stroke="#555555" stroke-width="4.2" stroke-linecap="round"/><path d="M649.6 557.4L649.5 670.2" fill="none" stroke="#BDBDBD" stroke-width="2.5" stroke-dasharray="9 7"/><path d="M716.7 557.4L716.7 557.4Q716.7 566.4 725.7 566.4L889 566.4Q900 566.4 900 577.4L900 670.3" fill="none" stroke="#555555" stroke-width="4.2" stroke-linecap="round"/><path d="M716.7 557.4L716.7 557.4Q716.7 566.4 725.7 566.4L889 566.4Q900 566.4 900 577.4L900 670.3" fill="none" stroke="#BDBDBD" stroke-width="2.5" stroke-dasharray="9 7"/><path d="M688.8 606.6L688.8 620.8" fill="none" stroke="#8C8C8C" stroke-width="4.2" stroke-linecap="round"/><path d="M688.8 606.6L688.8 620.8" fill="none" stroke="#C4C4C4" stroke-width="2.5" stroke-linecap="round"/><path d="M688.8 651.2L687 670.2" fill="none" stroke="#8C8C8C" stroke-width="4.2" stroke-linecap="round"/><path d="M688.8 651.2L687 670.2" fill="none" stroke="#C4C4C4" stroke-width="2.5" stroke-linecap="round"/><path d="M778.9 651.2C778.9 660 774 661.5 762 661C748 660.2 740 658 732 658.5C727 659 726.4 664 726.4 670.2" fill="none" stroke="#8C8C8C" stroke-width="4.2" stroke-linecap="round"/><path d="M778.9 651.2C778.9 660 774 661.5 762 661C748 660.2 740 658 732 658.5C727 659 726.4 664 726.4 670.2" fill="none" stroke="#C4C4C4" stroke-width="2.5" stroke-linecap="round"/><path d="M937.9 570.3L939.6 578.6" fill="none" stroke="#8C8C8C" stroke-width="4.2" stroke-linecap="round"/><path d="M937.9 570.3L939.6 578.6" fill="none" stroke="#C4C4C4" stroke-width="2.5" stroke-linecap="round"/><path d="M939.6 606.4L939.6 621.1" fill="none" stroke="#8C8C8C" stroke-width="4.2" stroke-linecap="round"/><path d="M939.6 606.4L939.6 621.1" fill="none" stroke="#C4C4C4" stroke-width="2.5" stroke-linecap="round"/><path d="M939.6 650.7L937.9 670.3" fill="none" stroke="#8C8C8C" stroke-width="4.2" stroke-linecap="round"/><path d="M939.6 650.7L937.9 670.3" fill="none" stroke="#C4C4C4" stroke-width="2.5" stroke-linecap="round"/><path d="M1029.7 650.7C1029.7 659.5 1024.8 661 1012.8 660.6C998.8 659.8 990.8 657.6 982.8 658.1C977.8 658.6 977.1 664 977.1 670.3" fill="none" stroke="#8C8C8C" stroke-width="4.2" stroke-linecap="round"/><path d="M1029.7 650.7C1029.7 659.5 1024.8 661 1012.8 660.6C998.8 659.8 990.8 657.6 982.8 658.1C977.8 658.6 977.1 664 977.1 670.3" fill="none" stroke="#C4C4C4" stroke-width="2.5" stroke-linecap="round"/><path d="M649.5 703.4L649.5 747.5" fill="none" stroke="#555555" stroke-width="4.2" stroke-linecap="round"/><path d="M649.5 703.4L649.5 747.5" fill="none" stroke="#BDBDBD" stroke-width="2.5" stroke-dasharray="9 7"/><path d="M649.5 703.4L649.5 723.8Q649.5 734.8 660.5 734.8L1105.5 734.8Q1116.5 734.8 1116.5 745.8L1116.5 747.1" fill="none" stroke="#555555" stroke-width="4.2" stroke-linecap="round"/><path d="M649.5 703.4L649.5 723.8Q649.5 734.8 660.5 734.8L1105.5 734.8Q1116.5 734.8 1116.5 745.8L1116.5 747.1" fill="none" stroke="#BDBDBD" stroke-width="2.5" stroke-dasharray="9 7"/><path d="M900 703.1L900.2 871.8" fill="none" stroke="#555555" stroke-width="4.2" stroke-linecap="round"/><path d="M900 703.1L900.2 871.8" fill="none" stroke="#BDBDBD" stroke-width="2.5" stroke-dasharray="9 7"/><path d="M900 703.1L900 708.6Q900 719.6 911 719.6L1379.4 719.6Q1390.4 719.6 1390.4 730.6L1390.4 747.1" fill="none" stroke="#555555" stroke-width="4.2" stroke-linecap="round"/><path d="M900 703.1L900 708.6Q900 719.6 911 719.6L1379.4 719.6Q1390.4 719.6 1390.4 730.6L1390.4 747.1" fill="none" stroke="#BDBDBD" stroke-width="2.5" stroke-dasharray="9 7"/><path d="M239.8 777.1L239.8 792.7Q239.8 803.7 250.8 803.7L638.5 803.7Q649.5 803.7 649.5 814.7L649.5 816.3" fill="none" stroke="#8C8C8C" stroke-width="4.2" stroke-linecap="round"/><path d="M239.8 777.1L239.8 792.7Q239.8 803.7 250.8 803.7L638.5 803.7Q649.5 803.7 649.5 814.7L649.5 816.3" fill="none" stroke="#C4C4C4" stroke-width="2.5" stroke-linecap="round"/><path d="M480.6 777.1L480.6 778.6Q480.6 789.6 491.6 789.6L753.3 789.6Q764.3 789.6 764.3 800.6L764.3 816.3" fill="none" stroke="#8C8C8C" stroke-width="4.2" stroke-linecap="round"/><path d="M480.6 777.1L480.6 778.6Q480.6 789.6 491.6 789.6L753.3 789.6Q764.3 789.6 764.3 800.6L764.3 816.3" fill="none" stroke="#C4C4C4" stroke-width="2.5" stroke-linecap="round"/><path d="M649.5 780.5L649.5 816.3" fill="none" stroke="#555555" stroke-width="4.2" stroke-linecap="round"/><path d="M649.5 780.5L649.5 816.3" fill="none" stroke="#BDBDBD" stroke-width="2.5" stroke-dasharray="9 7"/><path d="M649.5 780.5L649.5 788.8Q649.5 799.8 660.5 799.8L753.3 799.8Q764.3 799.8 764.3 810.8L764.3 816.3" fill="none" stroke="#555555" stroke-width="4.2" stroke-linecap="round"/><path d="M649.5 780.5L649.5 788.8Q649.5 799.8 660.5 799.8L753.3 799.8Q764.3 799.8 764.3 810.8L764.3 816.3" fill="none" stroke="#BDBDBD" stroke-width="2.5" stroke-dasharray="9 7"/><path d="M649.5 849L649.5 853.2Q649.5 864.2 660.5 864.2L843.4 864.2Q851 864.2 851 871.8L851 871.8" fill="none" stroke="#555555" stroke-width="4.2" stroke-linecap="round"/><path d="M649.5 849L649.5 853.2Q649.5 864.2 660.5 864.2L843.4 864.2Q851 864.2 851 871.8L851 871.8" fill="none" stroke="#BDBDBD" stroke-width="2.5" stroke-dasharray="9 7"/><path d="M764.3 849L764.3 849Q764.3 854.8 770.1 854.8L864.7 854.8Q875.7 854.8 875.7 865.8L875.7 871.8" fill="none" stroke="#555555" stroke-width="4.2" stroke-linecap="round"/><path d="M764.3 849L764.3 849Q764.3 854.8 770.1 854.8L864.7 854.8Q875.7 854.8 875.7 865.8L875.7 871.8" fill="none" stroke="#BDBDBD" stroke-width="2.5" stroke-dasharray="9 7"/><path d="M207.2 600L207.2 630.6" fill="none" stroke="#8C8C8C" stroke-width="4.2" stroke-linecap="round"/><path d="M207.2 600L207.2 630.6" fill="none" stroke="#C4C4C4" stroke-width="2.5" stroke-linecap="round"/><path d="M207.2 664L207.2 664Q207.2 671 214.2 671L247.9 671Q256.6 671 256.6 679.7L256.6 679.7" fill="none" stroke="#8C8C8C" stroke-width="4.2" stroke-linecap="round"/><path d="M207.2 664L207.2 664Q207.2 671 214.2 671L247.9 671Q256.6 671 256.6 679.7L256.6 679.7" fill="none" stroke="#C4C4C4" stroke-width="2.5" stroke-linecap="round"/><path d="M256.6 713.1L256.6 717.5Q256.6 728.5 267.6 728.5L309.9 728.5Q320.9 728.5 320.9 717.5L320.9 626.7Q320.9 615.7 309.9 615.7L218.2 615.7Q207.2 615.7 207.2 626.7L207.2 630.6" fill="none" stroke="#8C8C8C" stroke-width="4.2" stroke-linecap="round"/><path d="M256.6 713.1L256.6 717.5Q256.6 728.5 267.6 728.5L309.9 728.5Q320.9 728.5 320.9 717.5L320.9 626.7Q320.9 615.7 309.9 615.7L218.2 615.7Q207.2 615.7 207.2 626.7L207.2 630.6" fill="none" stroke="#C4C4C4" stroke-width="2.5" stroke-linecap="round"/><path d="M207.2 664L207.2 719Q207.2 730 218.2 730L228.8 730Q239.8 730 239.8 741L239.8 743.7" fill="none" stroke="#8C8C8C" stroke-width="4.2" stroke-linecap="round"/><path d="M207.2 664L207.2 719Q207.2 730 218.2 730L228.8 730Q239.8 730 239.8 741L239.8 743.7" fill="none" stroke="#C4C4C4" stroke-width="2.5" stroke-linecap="round"/><path d="M207.2 664L207.2 825.7" fill="none" stroke="#8C8C8C" stroke-width="4.2" stroke-linecap="round"/><path d="M207.2 664L207.2 825.7" fill="none" stroke="#C4C4C4" stroke-width="2.5" stroke-linecap="round"/><path d="M207.2 859.1L207.2 876.2" fill="none" stroke="#8C8C8C" stroke-width="4.2" stroke-linecap="round"/><path d="M207.2 859.1L207.2 876.2" fill="none" stroke="#C4C4C4" stroke-width="2.5" stroke-linecap="round"/><path d="M174.3 547.5L174.3 851.9Q174.3 862.9 185.3 862.9L196.2 862.9Q207.2 862.9 207.2 873.9L207.2 876.2" fill="none" stroke="#8C8C8C" stroke-width="4.2" stroke-linecap="round"/><path d="M174.3 547.5L174.3 851.9Q174.3 862.9 185.3 862.9L196.2 862.9Q207.2 862.9 207.2 873.9L207.2 876.2" fill="none" stroke="#C4C4C4" stroke-width="2.5" stroke-linecap="round"/><path d="M444.8 600L444.8 630.6" fill="none" stroke="#8C8C8C" stroke-width="4.2" stroke-linecap="round"/><path d="M444.8 600L444.8 630.6" fill="none" stroke="#C4C4C4" stroke-width="2.5" stroke-linecap="round"/><path d="M444.8 664L444.8 664Q444.8 671 451.8 671L485.3 671Q494 671 494 679.7L494 679.7" fill="none" stroke="#8C8C8C" stroke-width="4.2" stroke-linecap="round"/><path d="M444.8 664L444.8 664Q444.8 671 451.8 671L485.3 671Q494 671 494 679.7L494 679.7" fill="none" stroke="#C4C4C4" stroke-width="2.5" stroke-linecap="round"/><path d="M494 713.1L494 717.5Q494 728.5 505 728.5L548.2 728.5Q559.2 728.5 559.2 717.5L559.2 626.7Q559.2 615.7 548.2 615.7L455.8 615.7Q444.8 615.7 444.8 626.7L444.8 630.6" fill="none" stroke="#8C8C8C" stroke-width="4.2" stroke-linecap="round"/><path d="M494 713.1L494 717.5Q494 728.5 505 728.5L548.2 728.5Q559.2 728.5 559.2 717.5L559.2 626.7Q559.2 615.7 548.2 615.7L455.8 615.7Q444.8 615.7 444.8 626.7L444.8 630.6" fill="none" stroke="#C4C4C4" stroke-width="2.5" stroke-linecap="round"/><path d="M444.8 664L444.8 719Q444.8 730 455.8 730L469.6 730Q480.6 730 480.6 741L480.6 743.7" fill="none" stroke="#8C8C8C" stroke-width="4.2" stroke-linecap="round"/><path d="M444.8 664L444.8 719Q444.8 730 455.8 730L469.6 730Q480.6 730 480.6 741L480.6 743.7" fill="none" stroke="#C4C4C4" stroke-width="2.5" stroke-linecap="round"/><path d="M444.8 664L444.9 825.7" fill="none" stroke="#8C8C8C" stroke-width="4.2" stroke-linecap="round"/><path d="M444.8 664L444.9 825.7" fill="none" stroke="#C4C4C4" stroke-width="2.5" stroke-linecap="round"/><path d="M444.9 859.1L444.9 876.2" fill="none" stroke="#8C8C8C" stroke-width="4.2" stroke-linecap="round"/><path d="M444.9 859.1L444.9 876.2" fill="none" stroke="#C4C4C4" stroke-width="2.5" stroke-linecap="round"/><path d="M415.1 547.5L415.1 851.9Q415.1 862.9 426.1 862.9L433.9 862.9Q444.9 862.9 444.9 873.9L444.9 876.2" fill="none" stroke="#8C8C8C" stroke-width="4.2" stroke-linecap="round"/><path d="M415.1 547.5L415.1 851.9Q415.1 862.9 426.1 862.9L433.9 862.9Q444.9 862.9 444.9 873.9L444.9 876.2" fill="none" stroke="#C4C4C4" stroke-width="2.5" stroke-linecap="round"/><path d="M851 904.6L851.1 1001.3" fill="none" stroke="#555555" stroke-width="4.2" stroke-linecap="round"/><path d="M851 904.6L851.1 1001.3" fill="none" stroke="#BDBDBD" stroke-width="2.5" stroke-dasharray="9 7"/><path d="M882.1 942.4L882.1 957" fill="none" stroke="#8C8C8C" stroke-width="4.2" stroke-linecap="round"/><path d="M882.1 942.4L882.1 957" fill="none" stroke="#C4C4C4" stroke-width="2.5" stroke-linecap="round"/><path d="M882.1 986.4C882.1 992 887 994 888 996C888.6 997.5 888.6 999 888.6 1001.3" fill="none" stroke="#8C8C8C" stroke-width="4.2" stroke-linecap="round"/><path d="M882.1 986.4C882.1 992 887 994 888 996C888.6 997.5 888.6 999 888.6 1001.3" fill="none" stroke="#C4C4C4" stroke-width="2.5" stroke-linecap="round"/><path d="M972.4 986.4C972.4 995 967.5 996.5 955.5 996.1C941.5 995.3 937 993.5 932 994C928.5 994.5 928 997 928 1001.3" fill="none" stroke="#8C8C8C" stroke-width="4.2" stroke-linecap="round"/><path d="M972.4 986.4C972.4 995 967.5 996.5 955.5 996.1C941.5 995.3 937 993.5 932 994C928.5 994.5 928 997 928 1001.3" fill="none" stroke="#C4C4C4" stroke-width="2.5" stroke-linecap="round"/><path d="M851.1 1034.3L851.1 1068.2" fill="none" stroke="#555555" stroke-width="4.2" stroke-linecap="round"/><path d="M851.1 1034.3L851.1 1068.2" fill="none" stroke="#BDBDBD" stroke-width="2.5" stroke-dasharray="9 7"/><path d="M851.1 1101.5L851.1 1110Q851.1 1121 862.1 1121L985.8 1121Q996.8 1121 996.8 1132L996.8 1134" fill="none" stroke="#555555" stroke-width="4.2" stroke-linecap="round"/><path d="M851.1 1101.5L851.1 1110Q851.1 1121 862.1 1121L985.8 1121Q996.8 1121 996.8 1132L996.8 1134" fill="none" stroke="#BDBDBD" stroke-width="2.5" stroke-dasharray="9 7"/><path d="M1013.6 1109.4L1014.8 1134" fill="none" stroke="#8C8C8C" stroke-width="4.2" stroke-linecap="round"/><path d="M1013.6 1109.4L1014.8 1134" fill="none" stroke="#C4C4C4" stroke-width="2.5" stroke-linecap="round"/><path d="M996.8 1166.7L998.3 1206" fill="none" stroke="#555555" stroke-width="4.2" stroke-linecap="round"/><path d="M996.8 1166.7L998.3 1206" fill="none" stroke="#BDBDBD" stroke-width="2.5" stroke-dasharray="9 7"/><path d="M996.8 1166.7L996.8 1177.7Q996.8 1188.7 1007.8 1188.7L1017.2 1188.7Q1028.2 1188.7 1028.2 1199.7L1028.2 1206" fill="none" stroke="#555555" stroke-width="4.2" stroke-linecap="round"/><path d="M996.8 1166.7L996.8 1177.7Q996.8 1188.7 1007.8 1188.7L1017.2 1188.7Q1028.2 1188.7 1028.2 1199.7L1028.2 1206" fill="none" stroke="#BDBDBD" stroke-width="2.5" stroke-dasharray="9 7"/></svg>
</div></div></body></html>
